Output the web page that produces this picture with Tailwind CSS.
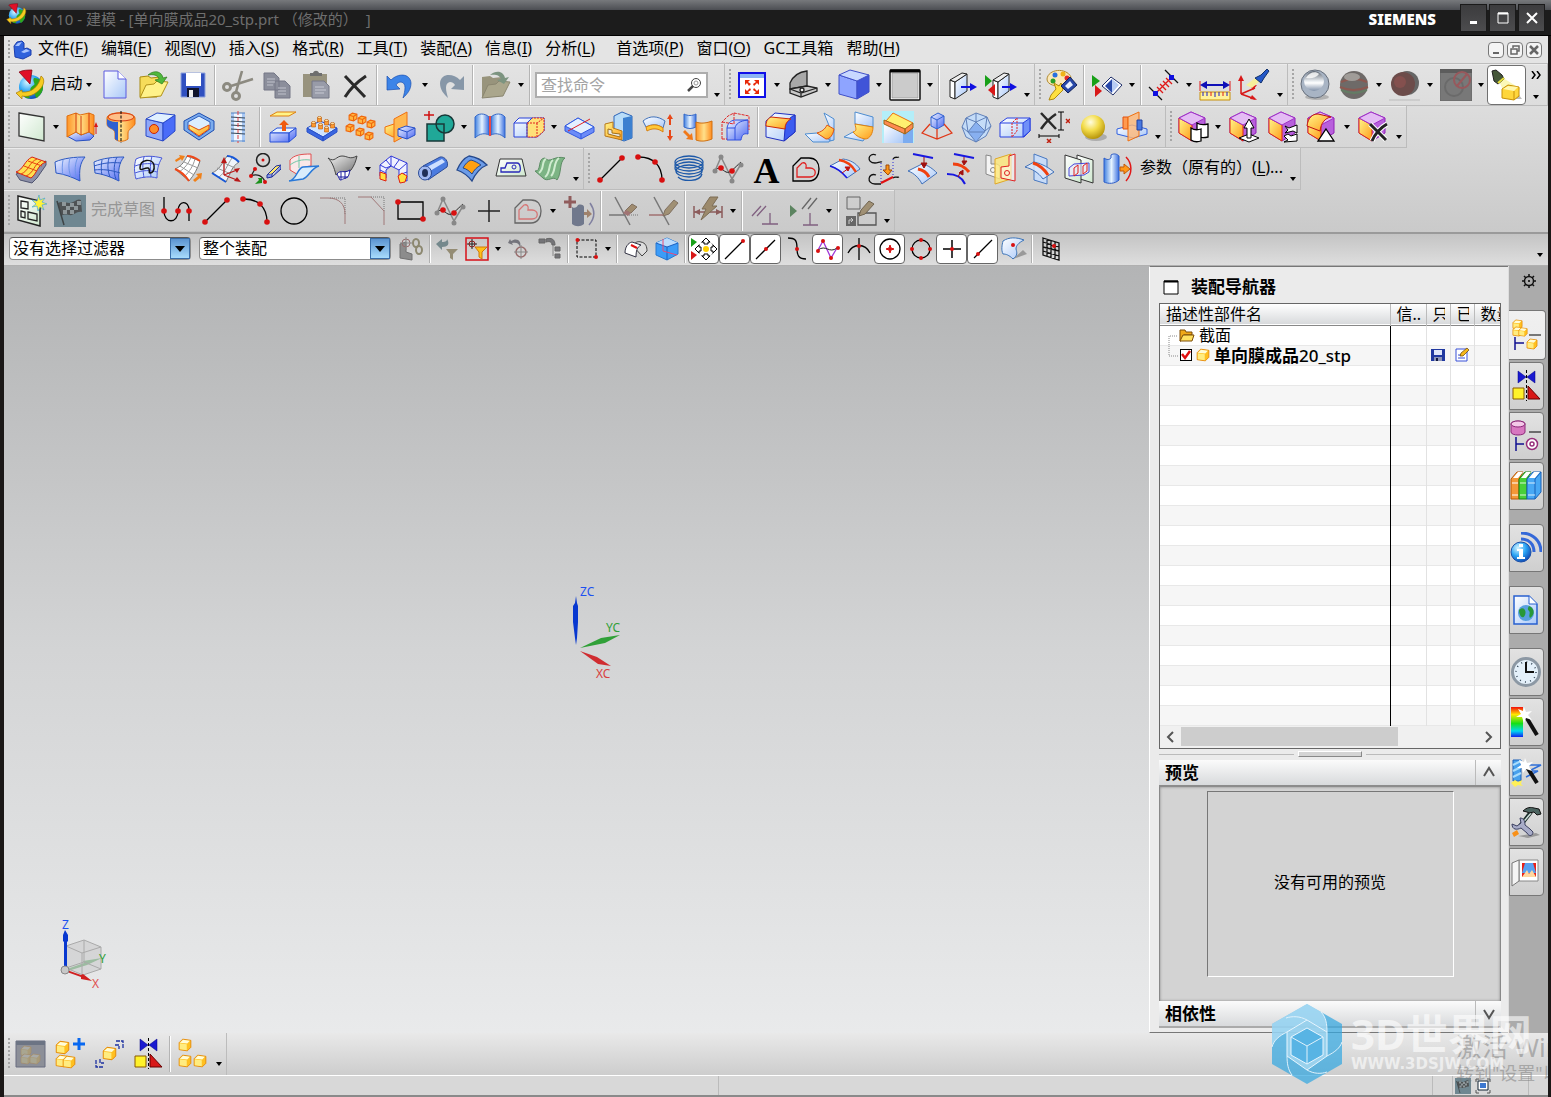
<!DOCTYPE html>
<html lang="zh-CN">
<head>
  <meta charset="UTF-8" />
  <meta name="viewport" content="width=device-width, initial-scale=1.0" />
  <title>NX 10 - 建模</title>
  <script src="https://cdn.jsdelivr.net/npm/@tailwindcss/browser@4"></script>
</head>
<body class="flex h-screen flex-col overflow-hidden bg-[#1b1817] font-['Noto_Sans','Noto_Sans_CJK_SC',sans-serif] text-base leading-5 text-black">

  <!-- shared gradients and symbols -->
  <svg class="absolute size-0" aria-hidden="true">
    <defs>
      <linearGradient id="gB" x1="0" y1="0" x2="1" y2="1"><stop offset="0" stop-color="#f2f8ff"/><stop offset="1" stop-color="#4a66f2"/></linearGradient>
      <linearGradient id="gC" x1="0" y1="0" x2="1" y2="0"><stop offset="0" stop-color="#3f7fe0"/><stop offset=".5" stop-color="#e6f3ff"/><stop offset="1" stop-color="#3a6fe0"/></linearGradient>
      <linearGradient id="gL" x1="0" y1="0" x2="1" y2="1"><stop offset="0" stop-color="#ffffff"/><stop offset="1" stop-color="#a9c8f8"/></linearGradient>
      <linearGradient id="gO" x1="0" y1="0" x2="1" y2="1"><stop offset="0" stop-color="#fff68a"/><stop offset="1" stop-color="#ff9a1a"/></linearGradient>
      <linearGradient id="gD" x1="0" y1="0" x2="1" y2="0"><stop offset="0" stop-color="#ff9326"/><stop offset=".5" stop-color="#ffe08a"/><stop offset="1" stop-color="#ff8a1c"/></linearGradient>
      <linearGradient id="gG" x1="0" y1="0" x2="1" y2="1"><stop offset="0" stop-color="#ffffff"/><stop offset="1" stop-color="#cfe8cf"/></linearGradient>
      <linearGradient id="gS" x1="0" y1="0" x2="1" y2="1"><stop offset="0" stop-color="#f4f4f4"/><stop offset="1" stop-color="#6c6c6c"/></linearGradient>
      <linearGradient id="gRain" x1="0" y1="0" x2="0" y2="1"><stop offset="0" stop-color="#f20c0c"/><stop offset=".25" stop-color="#ffe600"/><stop offset=".55" stop-color="#16e016"/><stop offset=".8" stop-color="#00d8f0"/><stop offset="1" stop-color="#1020f0"/></linearGradient>
      <radialGradient id="gSph" cx=".4" cy=".3" r=".7"><stop offset="0" stop-color="#fffde0"/><stop offset=".5" stop-color="#f3dc4a"/><stop offset="1" stop-color="#b8960c"/></radialGradient>
      <radialGradient id="gEarth" cx=".35" cy=".3" r=".8"><stop offset="0" stop-color="#d8f6ff"/><stop offset=".5" stop-color="#2aa4f4"/><stop offset="1" stop-color="#0a3aa8"/></radialGradient>
      <linearGradient id="gChr" x1="0" y1="0" x2="0" y2="1"><stop offset="0" stop-color="#5c6470"/><stop offset=".5" stop-color="#e8ecf0"/><stop offset=".6" stop-color="#ffffff"/><stop offset="1" stop-color="#8090a8"/></linearGradient>
    </defs>
    <symbol id="caret" viewBox="0 0 8 4"><path d="M1 0h6L4 4z"/></symbol>
    <symbol id="cube" viewBox="0 0 12 12"><path d="M1 4 4 1l7 1v6l-3 3-7-1z" fill="#ffc020" stroke="#e58a08" stroke-width=".8"/><path d="M1.600 4 4.300 1.500l5.900.8-2.300 2.400z" fill="#fffcd8"/><path d="M1.500 4.500l6 .9v5L1.500 9.600z" fill="#ffec80"/></symbol>
    <symbol id="ocube" viewBox="0 0 9 9"><path d="M1 3 4 1l4 1v4L5 8 1 7z" fill="#ffb640" stroke="#f0660c"/><path d="M1 3l4 1 3-2M5 4v4" fill="none" stroke="#f0660c"/></symbol>
    <symbol id="peg" viewBox="0 0 5 7"><path d="M.5 1.500v4.500h4V1.500z" fill="#ff9a30" stroke="#b85808" stroke-width=".6"/><ellipse cx="2.500" cy="1.500" rx="2" ry="1.100" fill="#ffe0a0" stroke="#b85808" stroke-width=".6"/></symbol>
    <symbol id="pcube" viewBox="0 0 32 32"><path d="M2 7 14 1l14 6v15l-13 8-13-8z" fill="#b860dc" stroke="#9020b8"/><path d="M2 7l13 7v16L2 22z" fill="url(#gO)" stroke="#e0280c"/><path d="M2 7 14 1l14 6-13 7z" fill="#e4bcf4" stroke="#a030c8"/></symbol>
    <symbol id="nx" viewBox="0 0 32 32"><circle cx="16" cy="18" r="12" fill="url(#gEarth)"/><path d="M19 9c6 0 9 4 9 9s-3 8-6 11c-3-2-1-6-5-7s0-5 2-6-2-4 0-7zM8 26c3-1 6 0 7 3-3 1-6-1-7-3z" fill="#2ea81c"/><path d="M1 24l6-3v2c10 1 17-6 19-16 5 3 3 11-4 16-5 4-10 5-15 4v3z" fill="#f6cc22" stroke="#a87800" stroke-width=".7"/><path d="M4 3c4-2 9-2 13-2l-2 14z" fill="#e01028" stroke="#7c0010" stroke-width=".7"/></symbol>
    <symbol id="flag" viewBox="0 0 32 32"><path d="M0 0h32v32H0z" fill="#6f8791"/><path d="M4 8c5-3 10 2 15-1s6-3 8-2l1 12c-6-1-8 4-13 3s-6 0-8 1z" fill="#4e5254"/><path d="M8 7h4v4H8zM16 8h4v4h-4zM23 6h4v4h-4zM12 11h4v4h-4zM20 11h4v4h-4zM9 15h4v4H9zM16 15h4v4h-4z" fill="#8e979a"/><path d="M3 6l7 24" stroke="#3e4446" stroke-width="1.500"/></symbol>
    <symbol id="mirror" viewBox="0 0 32 32"><path d="M8 1l8 6-8 6zM25 1l-8 6 8 6z" fill="#1a1ad0" stroke="#000080" stroke-width=".5"/><path d="M16.500 0v31" stroke="#000" stroke-dasharray="3 2"/><path d="M3 18h11v11H3z" fill="#fff22a" stroke="#8a5a00"/><path d="M18 16v13h12z" fill="#d81818" stroke="#600"/></symbol>
    <symbol id="spline" viewBox="0 0 32 32"><path d="M3 18 9 4l11 22 9-15" fill="none" stroke="#888" stroke-width="1.500"/><path d="M3 18c4-6 7-1 11 1s8-4 15-10" fill="none" stroke="#222"/><g fill="#888"><circle cx="3" cy="18" r="2.500"/><circle cx="9" cy="4" r="2.500"/><circle cx="20" cy="28" r="2.500"/><circle cx="29" cy="12" r="2.500"/></g><g fill="#d81010"><circle cx="9" cy="15" r="2.800"/><circle cx="20" cy="18" r="2.800"/></g></symbol>
    <symbol id="line" viewBox="0 0 32 32"><path d="M5 27 27 5" stroke="#000" stroke-width="1.300"/><circle cx="5" cy="27" r="2.800" fill="#d81010"/><circle cx="27" cy="5" r="2.800" fill="#d81010"/></symbol>
    <symbol id="arc" viewBox="0 0 32 32"><path d="M5 4c14 0 23 8 23 23" fill="none" stroke="#000" stroke-width="1.300"/><g fill="#d81010"><circle cx="4" cy="4" r="2.800"/><circle cx="21" cy="9" r="2.800"/><circle cx="28" cy="27" r="2.800"/></g></symbol>
    <symbol id="offset" viewBox="0 0 32 32"><path d="M3 28V13L11 5h8c7 0 10 5 10 11s-3 12-10 12z" fill="none" stroke="#000" stroke-width="1.300"/><path d="M7 24v-9l5-5c3-1 5 1 4 5h4c7 0 7 9 0 9z" fill="none" stroke="#e02020" stroke-width="1.300"/></symbol>
  </svg>

  <!-- title bar -->
  <header class="flex h-9 shrink-0 items-center border-b border-black bg-[linear-gradient(#77797c_0,#4c4e53_10px,#1c1c1c_10px)] pl-1.5 pr-1.5">
    <svg class="mb-2 size-[22px] shrink-0"><use href="#nx"/></svg>
    <h1 class="ml-1 flex-1 pt-0.5 text-[15px] whitespace-pre text-[#6e6e6e]">NX 10 - 建模 - [单向膜成品20_stp.prt （修改的）  ]</h1>
    <span class="mr-6 pt-0.5 text-[15px] font-black text-white">SIEMENS</span>
    <div class="flex gap-0.5 [&>button]:grid [&>button]:h-7 [&>button]:w-[27px] [&>button]:place-items-center [&>button]:border [&>button]:border-[#1a1a1a] [&>button]:bg-linear-to-b [&>button]:from-[#3c3c3e] [&>button]:to-[#4c4c4e]">
      <button aria-label="最小化"><svg class="size-4" viewBox="0 0 16 16"><path d="M4 11h7v3H4z" fill="#fff"/></svg></button>
      <button aria-label="最大化"><svg class="size-4" viewBox="0 0 16 16"><path d="M3 3h10v10H3z" fill="none" stroke="#fff"/><path d="M3 3.500h10" stroke="#fff" stroke-width="2"/></svg></button>
      <button aria-label="关闭"><svg class="size-4" viewBox="0 0 16 16"><path d="M3 3l10 10M13 3 3 13" stroke="#fff" stroke-width="2"/></svg></button>
    </div>
  </header>

  <div class="ml-1 mr-[3px] flex min-h-0 flex-1 flex-col bg-[#d4d4d4]">

    <!-- menu bar -->
    <nav class="flex h-7 shrink-0 items-center border-b border-[#bdbdbd] bg-[#e4e4e4] pl-1 pr-1.5 whitespace-nowrap [&_u]:underline-offset-2">
      <i class="h-5 w-0.5 bg-[repeating-linear-gradient(#a2a2a2_0_2px,transparent_2px_4px)]"></i>
      <svg class="mr-1.5 ml-0.5 size-5 shrink-0" viewBox="0 0 20 20"><path d="M2 6l3-4 5-1 2 2v6l3-1 4 2v5l-8 4-8-2z" fill="#2f62dc" stroke="#1c3fae"/><path d="M3 6l3-3 4-1-3 4zM9 12l5-3 4 2-6 2z" fill="#a8c4ff"/></svg>
      <div class="flex gap-x-[13px] pb-1">
        <a href="#">文件(<u>F</u>)</a>
        <a href="#">编辑(<u>E</u>)</a>
        <a href="#">视图(<u>V</u>)</a>
        <a href="#">插入(<u>S</u>)</a>
        <a href="#">格式(<u>R</u>)</a>
        <a href="#">工具(<u>T</u>)</a>
        <a href="#">装配(<u>A</u>)</a>
        <a href="#">信息(<u>I</u>)</a>
        <a href="#">分析(<u>L</u>)</a>
        <a href="#" class="ml-2">首选项(<u>P</u>)</a>
        <a href="#">窗口(<u>O</u>)</a>
        <a href="#">GC工具箱</a>
        <a href="#">帮助(<u>H</u>)</a>
      </div>
      <div class="ml-auto flex gap-[3px] [&>button]:size-4 [&>button]:rounded-sm [&>button]:border [&>button]:border-[#777] [&>button]:bg-[#f4f4f4]">
        <button aria-label="最小化窗口"><svg viewBox="0 0 14 14"><path d="M4 9h6v2H4z" fill="#666"/></svg></button>
        <button aria-label="还原窗口"><svg viewBox="0 0 14 14"><path d="M5 5V3h6v5H9M3 6h6v5H3z" fill="none" stroke="#666" stroke-width="1.500"/></svg></button>
        <button aria-label="关闭窗口"><svg viewBox="0 0 14 14"><path d="M3 3l8 8M11 3l-8 8" stroke="#666" stroke-width="2.500"/></svg></button>
      </div>
    </nav>

    <!-- tool bars -->
    <div class="shrink-0 overflow-hidden border-b-2 border-[#9a9a9a] bg-linear-to-b from-[#e3e3e3] to-[#cacaca] whitespace-nowrap
                [&_section]:flex [&_section]:h-[42px] [&_section]:items-center [&_section]:border-r [&_section]:border-b [&_section]:border-[#bcbcbc] [&_section]:shadow-[inset_0_1px_#ebebeb]
                [&_button]:flex [&_button]:h-10 [&_button]:shrink-0 [&_button]:items-center [&_button]:justify-center
                [&_i]:mr-px [&_i]:ml-1 [&_i]:h-8 [&_i]:w-0.5 [&_i]:shrink-0 [&_i]:bg-[repeating-linear-gradient(#a6a6a6_0_2px,transparent_2px_4px)]
                [&_hr]:mx-0.5 [&_hr]:h-10 [&_hr]:w-0.5 [&_hr]:shrink-0 [&_hr]:border-0 [&_hr]:border-r [&_hr]:border-l [&_hr]:border-r-white [&_hr]:border-l-[#b4b4b4]">

      <div class="flex">
        <section aria-label="标准">
          <i></i>
          <button class="w-[39px]" aria-label="NX"><svg class="size-8"><use href="#nx"/></svg></button>
          <button class="w-[33px] pb-1">启动</button>
          <button class="w-3" aria-label="展开"><svg class="h-1 w-2"><use href="#caret"/></svg></button>
          <button class="w-[39px]" aria-label="新建"><svg class="size-8" viewBox="0 0 32 32"><path d="M5 2h14l8 8v19H5z" fill="url(#gL)" stroke="#5a5ae0"/><path d="M19 2v8h8" fill="#fff" stroke="#5a5ae0"/></svg></button>
          <button class="w-[39px]" aria-label="打开"><svg class="size-8" viewBox="0 0 32 32"><path d="M2 8l8-1 3 2 9-1 1 6-4 14H2z" fill="#f6dc5a" stroke="#a88a10"/><path d="M2 29 8 16l8-1 3-3 11 1-7 14z" fill="#fff28a" stroke="#b09018"/><path d="M10 6c7-6 14-3 15 3l4-1-5 7-7-4 4-1c-1-4-6-5-11-4z" fill="#4fb83c" stroke="#2c7a1c" stroke-width=".7"/></svg></button>
          <button class="w-[39px]" aria-label="保存"><svg class="size-8" viewBox="0 0 32 32"><path d="M4 4h24v24H4z" fill="#3050c0" stroke="#8ea2dc"/><path d="M9 4h15v13H9z" fill="#fff"/><path d="M10 19h12v9H10z" fill="#10142c"/><path d="M12 21h4v7h-4z" fill="#eee"/></svg></button>
          <hr>
          <button class="w-[39px]" aria-label="剪切"><svg class="size-8" viewBox="0 0 32 32" fill="none" stroke="#8c8a80" stroke-width="3"><circle cx="5" cy="18" r="3.500"/><circle cx="14" cy="27" r="3.500"/><path d="M14 23 20 2M9 17l22-7" stroke-width="2.600"/></svg></button>
          <button class="w-[39px]" aria-label="复制"><svg class="size-8" viewBox="0 0 32 32" fill="#8b8e9b" stroke="#747786"><path d="M3 4h10l5 5v12H3zM14 12h10l5 5v12H14z"/><path d="M6 10h8M6 13h8M6 16h6M17 19h8M17 22h8M17 25h8" stroke="#c0c2cc"/></svg></button>
          <button class="w-[39px]" aria-label="粘贴"><svg class="size-8" viewBox="0 0 32 32"><path d="M3 5h24v23H3z" fill="#98937e"/><path d="M10 7V4h3c1-3 5-3 6 0h3v3z" fill="#6e6e6e"/><path d="M12 12h12l5 5v12H12z" fill="#989ba8" stroke="#747786"/><path d="M15 18h9M15 21h11M15 24h9" stroke="#c8cad4"/></svg></button>
          <button class="w-[39px]" aria-label="删除"><svg class="size-8" viewBox="0 0 32 32"><path d="M6 7l20 21M27 7C18 13 11 20 6 28" fill="none" stroke="#2a2a2a" stroke-width="3"/></svg></button>
          <hr>
          <button class="w-[39px]" aria-label="撤销"><svg class="size-8" viewBox="0 0 32 32"><path d="M3 7l4 4C14 4 26 4 27 14c0 7-4 11-8 15 2-7 4-15-2-16-2 0-4 1-5 3l4 4-13 1z" fill="#3c84e8" stroke="#1c50b0" stroke-width=".7"/></svg></button>
          <button class="w-3" aria-label="展开"><svg class="h-1 w-2"><use href="#caret"/></svg></button>
          <button class="w-[39px]" aria-label="重做"><svg class="size-8" viewBox="0 0 32 32"><path d="M29 7l-4 4C18 4 6 4 5 14c0 7 4 11 8 15-2-7-4-15 2-16 2 0 4 1 5 3l-4 4 13 1z" fill="#8797a8"/></svg></button>
          <hr>
          <button class="w-[39px]" aria-label="打开最近的部件"><svg class="size-8" viewBox="0 0 32 32"><path d="M2 8l8-1 3 2 9-1 1 6-4 14H2z" fill="#98947c"/><path d="M2 29 8 16l8-1 3-3 11 1-7 14z" fill="#aaa68c" stroke="#8a8670"/><path d="M10 6c7-6 14-3 15 3l4-1-5 7-7-4 4-1c-1-4-6-5-11-4z" fill="#7c9480"/></svg></button>
          <button class="w-3" aria-label="展开"><svg class="h-1 w-2"><use href="#caret"/></svg></button>
          <hr>
          <label class="ml-0.5 mr-0.5 flex h-[26px] w-[173px] items-center border-2 border-[#adadad] bg-white pl-1 pr-1">
            <input type="text" aria-label="查找命令" placeholder="查找命令" class="min-w-0 flex-1 outline-none placeholder:text-[#a4a4a4]">
            <svg class="size-4" viewBox="0 0 16 16" fill="none" stroke="#444"><circle cx="10" cy="6" r="4.500"/><circle cx="10" cy="6" r="2" stroke="#999"/><path d="M7 9l-5 5" stroke-width="2.500"/></svg>
          </label>
          <button class="w-3.5 pt-5" aria-label="工具条选项"><svg class="h-1 w-2"><use href="#caret"/></svg></button>
        </section>

        <section aria-label="视图">
          <i></i>
          <button class="w-[39px]" aria-label="适合窗口"><svg class="size-8" viewBox="0 0 32 32"><path d="M3 4h26v24H3z" fill="#fff" stroke="#1010e8" stroke-width="2"/><path d="M4 5h24v4H4z" fill="#8cb4f4"/><path d="M9 11h5l-2 2 3 2-2 2-2-3-2 2zM23 11v5l-2-2-3 3-1-2 3-2-2-2zM9 25v-5l2 2 3-3 1 2-3 2 2 2zM23 25h-5l2-2-3-2 1-2 3 3 2-2z" fill="#e82808"/></svg></button>
          <button class="w-3" aria-label="展开"><svg class="h-1 w-2"><use href="#caret"/></svg></button>
          <button class="w-[39px]" aria-label="带边着色"><svg class="size-8" viewBox="0 0 32 32" stroke="#222" stroke-width="1.300"><path d="M3 20v-6C6 7 11 3 20 2v15z" fill="#a8a8a8"/><path d="M3 20l17-3 10 2v3L14 28 3 24z" fill="#c8c8c8"/><path d="M3 20l11 4 16-5M14 24v4" fill="none"/><circle cx="15" cy="21" r="2" fill="#eee"/></svg></button>
          <button class="w-3" aria-label="展开"><svg class="h-1 w-2"><use href="#caret"/></svg></button>
          <button class="w-[39px]" aria-label="定向视图"><svg class="size-8" viewBox="0 0 32 32" stroke="#4050c8"><path d="M1 6l18 6v18L1 25z" fill="#8ea4ff"/><path d="M19 12l12-6v17l-12 7z" fill="#4054d8"/><path d="M1 6l11-5 19 5-12 6z" fill="#c8d8ff"/></svg></button>
          <button class="w-3" aria-label="展开"><svg class="h-1 w-2"><use href="#caret"/></svg></button>
          <button class="w-[39px]" aria-label="背景"><svg class="size-8" viewBox="0 0 32 32"><rect x="1" y="1" width="30" height="30" rx="1" fill="#fff" stroke="#111" stroke-width="1.500"/><path d="M3 4h26v25H3z" fill="#cbcbcb" stroke="#777" stroke-width=".5"/><path d="M1 2h30" stroke="#000" stroke-width="3"/></svg></button>
          <button class="w-3" aria-label="展开"><svg class="h-1 w-2"><use href="#caret"/></svg></button>
          <hr>
          <button class="w-[39px]" aria-label="剪切截面"><svg class="size-8" viewBox="0 0 32 32" stroke="#222"><path d="M4 11l5 2v17l-5-2z" fill="#fff"/><path d="M9 13l12-8v17L9 30z" fill="url(#gL)"/><path d="M4 11l12-7 5 1-12 8z" fill="#eee"/><path d="M15 17h9v-3l7 4-7 4v-3h-9z" fill="#1010e0" stroke="none"/></svg></button>
          <button class="w-[39px]" aria-label="编辑截面"><svg class="size-8" viewBox="0 0 32 32" stroke="#222"><path d="M8 11l5 2v17l-5-2z" fill="#fff"/><path d="M13 13l11-8v17l-11 8z" fill="url(#gL)"/><path d="M8 11l11-7 5 1-11 8z" fill="#eee"/><path d="M17 17h8v-3l7 4-7 4v-3h-8z" fill="#1010e0" stroke="none"/><path d="M0 6v12l7-6z" fill="#18a018" stroke="none"/><path d="M10 15v12l-7-6z" fill="#d81818" stroke="none"/></svg></button>
          <button class="w-3.5 pt-5" aria-label="工具条选项"><svg class="h-1 w-2"><use href="#caret"/></svg></button>
        </section>

        <section aria-label="实用工具">
          <i></i>
          <button class="w-[39px]" aria-label="编辑对象显示"><svg class="size-8" viewBox="0 0 32 32"><path d="M1 10C2 0 20-2 25 8c0 5-6 4-8 8-7 2-16 0-16-6z" fill="#fbe8b8" stroke="#b08a30"/><circle cx="9" cy="6" r="2.500" fill="#2870e0"/><circle cx="17" cy="5" r="2.500" fill="#f0b418"/><circle cx="7" cy="12" r="2.500" fill="#28a028"/><circle cx="21" cy="9" r="2.500" fill="#e02828"/><path d="M8 14l5 3 2-3 2 7-9 9-5 1 2-5 5-6z" fill="#ffe040" stroke="#b08a10"/><path d="M15 17 24 8l7 8-9 8z" fill="#2848a8" stroke="#10205c"/><path d="M19 17l5-5 3 4-5 4z" fill="#e8f0ff"/></svg></button>
          <hr>
          <button class="w-[39px]" aria-label="显示和隐藏"><svg class="size-8" viewBox="0 0 32 32"><path d="M1 6v12l8-6z" fill="#18a018"/><path d="M4 16v12l7-6z" fill="#d81818"/><path d="M11 17 20 8l11 8-9 10z" fill="#fff" stroke="#1c2c68"/><path d="M14 17l7-7v14z" fill="#2848a8"/><path d="M21 10l7 6-7 8z" fill="#b8ccf4"/></svg></button>
          <button class="w-3" aria-label="展开"><svg class="h-1 w-2"><use href="#caret"/></svg></button>
          <hr>
          <button class="w-[39px]" aria-label="测量距离"><svg class="size-8" viewBox="0 0 32 32"><path d="M1 18l13 13M17 1l13 13" stroke="#111" stroke-width="1.300"/><path d="M7 25 24 8M9 18l6 6M12 15l6 6M15 12l6 6M18 9l6 6" stroke="#e01818" stroke-width="1.300"/><path d="M5 22h5v5H5zM21 6h5v5h-5z" fill="#1010e0"/></svg></button>
          <button class="w-3" aria-label="展开"><svg class="h-1 w-2"><use href="#caret"/></svg></button>
          <button class="w-[39px]" aria-label="测量长度"><svg class="size-8" viewBox="0 0 32 32"><path d="M1 12v10M31 12v10" stroke="#e01818"/><path d="M6 16h20" stroke="#1010b8" stroke-width="2"/><path d="M1 16l7-4v8zM31 16l-7-4v8z" fill="#1010b8"/><path d="M1 23h30v8H1z" fill="#fff29a" stroke="#c89008"/><path d="M4 23v4M8 23v4M16 23v5M20 23v4M28 23v4" stroke="#1c1cc8"/><path d="M12 23v4M24 23v4" stroke="#e01818"/></svg></button>
          <button class="w-[39px]" aria-label="WCS 定向"><svg class="size-8" viewBox="0 0 32 32"><path d="M3 25V8M3 25l14-6M3 25l14 5" stroke="#d81818" stroke-width="1.500"/><path d="M0 12l3-6 3 6zM12 17l7-1-4 5zM12 30l7 1-5-5z" fill="#d81818"/><path d="M8 16 20 7l3 4-9 8z" fill="#f6f09c"/><path d="M17 9l6-3 6-6 2 2-5 7-3 5z" fill="#2458c8" stroke="#10306c"/></svg></button>
          <button class="w-3.5 pt-5" aria-label="工具条选项"><svg class="h-1 w-2"><use href="#caret"/></svg></button>
        </section>

        <section aria-label="真实着色" class="flex-1">
          <i></i>
          <button class="w-[39px]" aria-label="真实着色"><svg class="size-8" viewBox="0 0 32 32"><ellipse cx="18" cy="28" rx="12" ry="3" fill="#0003"/><circle cx="16" cy="15" r="14" fill="#a8b4c4" stroke="#68707c"/><circle cx="15" cy="12" r="10" fill="url(#gChr)"/><path d="M7 9c3-6 10-7 13-4-3 4-8 5-13 4z" fill="#fffc"/></svg></button>
          <button class="w-[39px]" aria-label="对象材料"><svg class="size-8" viewBox="0 0 32 32"><circle cx="16" cy="16" r="14" fill="#6e6a68"/><path d="M3 13c9-4 17-4 26 0M2 18c9 4 18 4 28 0" fill="none" stroke="#8c5850" stroke-width="2"/><path d="M3 21c9 4 17 4 26 0" fill="none" stroke="#647c64" stroke-width="2"/><ellipse cx="14" cy="8" rx="8" ry="4" fill="#a09c98"/></svg></button>
          <button class="w-3" aria-label="展开"><svg class="h-1 w-2"><use href="#caret"/></svg></button>
          <button class="w-[39px]" aria-label="全局反射"><svg class="size-8" viewBox="0 0 32 32"><circle cx="18" cy="14" r="12" fill="#666"/><circle cx="14" cy="15" r="12" fill="#6c4c4a"/><circle cx="11" cy="13" r="6" fill="#84504e"/><path d="M0 31h31" stroke="#bbb"/></svg></button>
          <button class="w-3" aria-label="展开"><svg class="h-1 w-2"><use href="#caret"/></svg></button>
          <button class="w-[39px]" aria-label="背景图像"><svg class="size-8" viewBox="0 0 32 32"><path d="M0 0h32v32H0z" fill="#787878" stroke="#666"/><path d="M0 0h32v4H0z" fill="#5c5c5c"/><circle cx="14" cy="18" r="9" fill="none" stroke="#6a6a6a" stroke-width="2"/><circle cx="22" cy="11" r="8" fill="none" stroke="#98585c" stroke-width="2"/><path d="M17 17 27 5" stroke="#98585c" stroke-width="2"/></svg></button>
          <button class="w-3" aria-label="展开"><svg class="h-1 w-2"><use href="#caret"/></svg></button>
          <button class="w-[39px] rounded border border-[#707070] bg-white" aria-label="光源"><svg class="size-8" viewBox="0 0 32 32"><path d="M8 12l4-3 18 11-16 6z" fill="#fbf8b8"/><path d="M1 2l4-1 6 5 2 4-6 5-4-3z" fill="#46583a" stroke="#222"/><path d="M7 14l6-5" stroke="#e8e03a" stroke-width="2"/><path d="M19 30h12l-3-4z" fill="#bbb"/><path d="M11 20l6-4 11 2v9l-5 4-12-2z" fill="#ffd63c" stroke="#c89008"/><path d="M12 20l5-3 10 1-4 4z" fill="#fff8b0"/><path d="M23 22v9" stroke="#c89008"/></svg></button>
          <button class="w-5 flex-col gap-4" aria-label="更多按钮"><svg class="h-2 w-3" viewBox="0 0 12 8"><path d="M2 0l3 4-3 4M7 0l3 4-3 4" fill="none" stroke="#000" stroke-width="1.500"/></svg><svg class="h-1 w-2"><use href="#caret"/></svg></button>
        </section>
      </div>

      <div class="flex">
        <section aria-label="特征">
          <i></i>
          <button class="w-[39px]" aria-label="基准平面"><svg class="size-8" viewBox="0 0 32 32"><path d="M4 2l25 4v24L4 25z" fill="url(#gG)" stroke="#333" stroke-width="1.300"/></svg></button>
          <button class="w-3" aria-label="展开"><svg class="h-1 w-2"><use href="#caret"/></svg></button>
          <button class="w-[39px]" aria-label="拉伸"><svg class="size-8" viewBox="0 0 32 32"><path d="M1 25l9-4 5 3 8-3 5 4-4 4-14 1z" fill="url(#gB)" stroke="#2850c0"/><path d="M1 5l9-3 4 2 9-2 5 2v20l-5-3-8 3-5-3-9 5z" fill="url(#gD)" stroke="#e07010"/><path d="M10 2v19M15 5v19M23 2v19" stroke="#d0380c" fill="none"/><path d="M30 23V15" stroke="#d81818"/><path d="M28 16l2-5 2 5z" fill="#d81818"/></svg></button>
          <button class="w-[39px]" aria-label="旋转"><svg class="size-8" viewBox="0 0 32 32"><path d="M2 7c0-7 27-7 28 0v6c-2 4-7 5-7 9v6c-4 3-10 3-13 0v-6c0-5-8-4-8-9z" fill="url(#gD)" stroke="#e07010"/><path d="M2 8c4 3 8 3 11 3v19l-3-2v-6c0-5-8-4-8-9z" fill="#3060d0"/><ellipse cx="16" cy="6" rx="13" ry="4" fill="#ffc088" stroke="#d83810"/><path d="M16 0v32" stroke="#000" stroke-dasharray="3 1.500"/></svg></button>
          <button class="w-[39px]" aria-label="孔"><svg class="size-8" viewBox="0 0 32 32" stroke="#2848c8"><path d="M2 8l17 4v18L2 25z" fill="#90a8f8"/><path d="M19 12l12-8v16l-12 10z" fill="#4a6cf8"/><path d="M2 8l11-6 18 2-12 8z" fill="#e0f0ff"/><circle cx="10" cy="18" r="4.500" fill="#ff8c28" stroke="#c82008"/></svg></button>
          <button class="w-[39px]" aria-label="抽壳"><svg class="size-8" viewBox="0 0 32 32"><path d="M1 10 16 2l15 8v9L16 29 1 19z" fill="#7cacec" stroke="#1c4cb0"/><path d="M5 11l11-6 11 6v7l-11 8-11-8z" fill="#dceeff" stroke="#2c5cc0"/><path d="M6 14l10 5 10-5v4l-10 7-10-7z" fill="url(#gO)" stroke="#e04808"/></svg></button>
          <button class="w-[39px]" aria-label="螺纹"><svg class="size-8" viewBox="0 0 32 32"><path d="M9 2h14v29H9z" fill="#a8c8f4"/><path d="M12 2h8v29h-8z" fill="#f0f6ff"/><path d="M9 2h14M9 30h14" stroke="#5080c0"/><path d="M9 6l14 1M9 10l14 1M9 14l14 1M9 18l14 1M9 22l14 1" stroke="#345"/><path d="M16 0v32" stroke="#e04040" stroke-dasharray="4 2"/></svg></button>
          <hr>
          <button class="w-[39px]" aria-label="偏置面"><svg class="size-8" viewBox="0 0 32 32"><path d="M3 22l7-5h19l-7 5z" fill="#eaf4ff" stroke="#2850d8"/><path d="M3 22h19v9H3zM22 22l7-5v8l-7 6z" fill="url(#gB)" stroke="#2850d8"/><path d="M3 5l7-4h19l-7 4z" fill="#fff48a" stroke="#e08010"/><path d="M15 20v-6h-3l5-5 5 5h-3v6z" fill="#f05a10"/></svg></button>
          <button class="w-[39px]" aria-label="阵列特征"><svg class="size-8" viewBox="0 0 32 32"><path d="M1 17l13-7 17 7-14 9z" fill="#cfe4ff" stroke="#2850c8"/><path d="M1 17v4l16 9v-4zM31 17v4l-14 9v-4z" fill="#3a66e0" stroke="#2850c8"/><use href="#peg" x="11" y="5" width="5" height="7"/><use href="#peg" x="18" y="8" width="5" height="7"/><use href="#peg" x="24" y="11" width="5" height="7"/><use href="#peg" x="5" y="10" width="5" height="7"/><use href="#peg" x="12" y="12" width="5" height="7"/><use href="#peg" x="18" y="15" width="5" height="7"/></svg></button>
          <button class="w-[39px]" aria-label="阵列几何特征"><svg class="size-8" viewBox="0 0 32 32"><use href="#ocube" x="3" y="1" width="10" height="10"/><use href="#ocube" x="12" y="4" width="10" height="10"/><use href="#ocube" x="21" y="8" width="10" height="10"/><use href="#ocube" x="0" y="12" width="10" height="10"/><use href="#ocube" x="10" y="16" width="10" height="10"/><use href="#ocube" x="19" y="20" width="10" height="10"/></svg></button>
          <button class="w-[39px]" aria-label="镜像特征"><svg class="size-8" viewBox="0 0 32 32"><path d="M1 16l9-3 8 3v8l-9 2-8-4z" fill="url(#gO)" stroke="#f07010"/><path d="M10 8l13-7v23l-13 7z" fill="#ffb850" stroke="#f07010"/><path d="M14 18l8-3 9 2v7l-8 4-9-3z" fill="url(#gB)" stroke="#2850c8"/><path d="M14 18l9 3 8-4M23 21v7" stroke="#2850c8" fill="none"/></svg></button>
          <button class="w-[39px]" aria-label="合并"><svg class="size-8" viewBox="0 0 32 32" stroke="#183838" stroke-width="1.500"><path d="M4 13h17v17H4z" fill="#20a898"/><circle cx="22" cy="13" r="9" fill="#20a898"/><path d="M13 13h8v9" fill="none"/><path d="M6 0v9M1 4h10" stroke="#d01010"/></svg></button>
          <button class="w-3" aria-label="展开"><svg class="h-1 w-2"><use href="#caret"/></svg></button>
          <button class="w-[39px]" aria-label="缝合"><svg class="size-8" viewBox="0 0 32 32" stroke="#3468c8"><path d="M1 27V6c3-4 10-4 14 0v18c-4-2-9-2-14 3z" fill="url(#gC)"/><path d="M31 27V6c-3-4-10-4-14 0v18c4-2 9-2 14 3z" fill="url(#gC)"/><path d="M16 5v20" stroke="#e84848" stroke-width="2"/></svg></button>
          <button class="w-[39px]" aria-label="修剪体"><svg class="size-8" viewBox="0 0 32 32"><path d="M1 12l5-5h25v13l-7 6H1z" fill="url(#gL)" stroke="#2840d8"/><path d="M14 12l5-5h12v13l-7 6H14z" fill="#ffe078" stroke="#e02020" stroke-dasharray="2 1"/><path d="M1 12h13v14M14 12l5-5" fill="none" stroke="#2840d8"/><path d="M14 12h10l7-5M24 12v14" fill="none" stroke="#e02020" stroke-dasharray="2 1"/></svg></button>
          <button class="w-3" aria-label="展开"><svg class="h-1 w-2"><use href="#caret"/></svg></button>
          <button class="w-[39px]" aria-label="拆分体"><svg class="size-8" viewBox="0 0 32 32" stroke="#3058e0"><path d="M1 15l13-8 16 9v5l-13 7-16-8z" fill="#6c8cf8"/><path d="M1 15l13-8 16 9-13 7z" fill="#e4f0ff"/><path d="M17 23v5" fill="none"/><path d="M4 20 26 8" stroke="#e02020"/></svg></button>
          <button class="w-[39px]" aria-label="分割面"><svg class="size-8" viewBox="0 0 32 32"><path d="M11 5l8-4 10 4v22l-8 3-10-4z" fill="#b8dcf8" stroke="#2c64b8"/><path d="M20 7l9-2v22l-9 3z" fill="#3c80d0"/><path d="M2 13l8-2v6l9 3v9L2 25z" fill="url(#gO)" stroke="#b87818"/><path d="M5 18l4 1v3l8 1v3l-12-3z" fill="#e8e8e8" stroke="#a07018"/></svg></button>
          <button class="w-[39px]" aria-label="加厚"><svg class="size-8" viewBox="0 0 32 32"><path d="M1 10c7-6 15-5 22 0l-2 7c-5-4-11-4-17-1z" fill="url(#gL)" stroke="#4070b8"/><path d="M4 16c6-3 12-3 17 1v4c-5-4-11-4-16-1z" fill="#ffc838" stroke="#d88010"/><path d="M28 3l3 5h-2v6h-2V8h-2zM28 30l3-5h-2v-6h-2v6h-2z" fill="#e84818"/></svg></button>
          <button class="w-[39px]" aria-label="缠绕"><svg class="size-8" viewBox="0 0 32 32"><path d="M3 3c4 2 8 2 12 0v13c-4 2-8 2-12 0z" fill="url(#gC)" stroke="#3468c8"/><path d="M15 11c5 2 11 1 16-1v18c-5 2-11 3-16 1z" fill="url(#gD)" stroke="#d07010"/><path d="M4 19l5 5 2-2 1 7-7-1 2-2-5-5z" fill="#f07818"/></svg></button>
          <button class="w-[39px]" aria-label="放置"><svg class="size-8" viewBox="0 0 32 32"><path d="M7 17c1-6 5-8 9-8h12v14c-5-1-6 1-7 6H7z" fill="url(#gB)" stroke="#3050e0"/><path d="M7 17h8c1-4 4-7 13-8M15 17v12" fill="none" stroke="#3050e0"/><path d="M2 28V11l6-6 6-3 15 3v14M2 28h5M2 11l12 2M14 2v11" fill="none" stroke="#e02828" stroke-dasharray="3 1"/></svg></button>
          <hr>
          <button class="w-[39px]" aria-label="边倒圆"><svg class="size-8" viewBox="0 0 32 32" stroke="#2030c0"><path d="M1 10l9-8 20 2v17L19 30 1 26z" fill="url(#gL)"/><path d="M20 18c0-7 5-12 10-14v17L19 30z" fill="#3c5cf0"/><path d="M1 15c0-4 1-7 5-9l20 2c-4 2-6 5-6 10z" fill="url(#gO)" stroke="#d02808"/></svg></button>
          <button class="w-[39px]" aria-label="面倒圆"><svg class="size-8" viewBox="0 0 32 32" stroke="#4c8cd0"><path d="M20 2l10 6v21l-4 1V17z" fill="url(#gL)"/><path d="M1 23l12-1 13 7-1 2H9z" fill="url(#gL)"/><path d="M13 22c7-2 9-6 10-8l7 4c-1 6-4 10-8 10z" fill="url(#gO)" stroke="#e05010"/></svg></button>
          <button class="w-[39px]" aria-label="软倒圆"><svg class="size-8" viewBox="0 0 32 32" stroke="#4c8cd0"><path d="M12 1l18 5v10l-18-3z" fill="url(#gL)"/><path d="M1 26l9-5 12 6-2 3z" fill="url(#gL)"/><path d="M12 13l18 3c0 6-3 12-8 12-5-1-9-3-12-7 4-1 3-3 2-8z" fill="url(#gO)" stroke="#e08010"/></svg></button>
          <button class="w-[39px]" aria-label="倒斜角"><svg class="size-8" viewBox="0 0 32 32"><path d="M0 0h32v32H0z" fill="#b4eef8"/><path d="M2 13l19 8v11H2z" fill="url(#gL)"/><path d="M21 20l10-7v19H21z" fill="#7cacf0"/><path d="M4 10 11 2l20 10-8 6z" fill="#fff070" stroke="#f07010"/><path d="M2 9l21 9v5L2 13zM23 18l8-6v5l-8 6z" fill="#ff8a50" stroke="#a06818"/></svg></button>
          <button class="w-[39px]" aria-label="拔模"><svg class="size-8" viewBox="0 0 32 32"><path d="M10 6l7-4 6 3v9l-7 4-6-3z" fill="url(#gB)" stroke="#3060d0"/><path d="M10 6l6 3 7-4M16 9v9" fill="none" stroke="#3060d0"/><path d="M9 13 1 22l15 6 15-6-8-9M16 18v10" fill="none" stroke="#e03818" stroke-width="1.300"/></svg></button>
          <button class="w-[39px]" aria-label="变换体"><svg class="size-8" viewBox="0 0 32 32" stroke="#6080b8"><path d="M16 2l11 4 4 9-5 10-10 6-10-5-4-10 4-9z" fill="#c4dcf8"/><path d="M16 11l-8 10 8 10 9-11z" fill="#88b0f0"/><path d="M6 7l10 4 11-5M16 2v9M8 21h17M2 16l6 5M31 15l-6 5M6 7l2 14M27 6l-2 14" fill="none"/></svg></button>
          <button class="w-[39px]" aria-label="分割体"><svg class="size-8" viewBox="0 0 32 32" stroke="#2840e0"><path d="M1 12l7-5h23v13l-6 6H1z" fill="url(#gL)"/><path d="M24 12l7-5v13l-7 6z" fill="#7090f8"/><path d="M1 12h23" fill="none"/><path d="M13 26V12l5-5v13z" fill="none" stroke="#e02020" stroke-dasharray="2 1"/></svg></button>
          <button class="w-[39px]" aria-label="删除尺寸"><svg class="size-8" viewBox="0 0 32 32"><path d="M3 2l15 16M18 3C12 7 7 12 3 18" fill="none" stroke="#2a2a2a" stroke-width="2.500"/><path d="M20 1h6M20 19h6M23 1v18M1 23v4M21 23v4M1 25h20" stroke="#000" fill="none"/><path d="M28 8l4 4M32 8l-4 4M9 28l4 4M13 28l-4 4" stroke="#c02010" stroke-width="1.500"/></svg></button>
          <button class="w-[39px]" aria-label="球"><svg class="size-8" viewBox="0 0 32 32"><ellipse cx="19" cy="26" rx="11" ry="4" fill="#0003"/><circle cx="16" cy="16" r="12" fill="url(#gSph)"/></svg></button>
          <button class="w-[39px]" aria-label="镜像体"><svg class="size-8" viewBox="0 0 32 32"><path d="M1 18l15-4 15 4v5l-14 4-16-4z" fill="url(#gL)" stroke="#3060e0"/><path d="M7 6h5v12H7z" fill="#ff9a50" stroke="#e05010"/><path d="M12 6 23 1v24l-11 5z" fill="#ffb878cc" stroke="#f07010"/><path d="M21 9h5v10h-5z" fill="#4878e0" stroke="#2040a0"/></svg></button>
          <button class="w-3.5 pt-5" aria-label="工具条选项"><svg class="h-1 w-2"><use href="#caret"/></svg></button>
        </section>

        <section aria-label="同步建模">
          <i></i>
          <button class="w-[39px]" aria-label="移动面"><svg class="size-8" viewBox="0 0 32 32"><use href="#pcube"/><path d="M20 12c3 2 7 2 11 1v13c-4 1-8 1-11-1z" fill="#fff" stroke="#000" stroke-width="1.300"/><path d="M14 17c3 2 7 2 10 1v12c-3 1-7 1-10-1z" fill="#fff" stroke="#000" stroke-width="1.300"/></svg></button>
          <button class="w-3" aria-label="展开"><svg class="h-1 w-2"><use href="#caret"/></svg></button>
          <button class="w-[39px]" aria-label="拉出面"><svg class="size-8" viewBox="0 0 32 32"><use href="#pcube"/><path d="M11 27l10-4 10 4-10 4z" fill="#fff" stroke="#000"/><path d="M19 27V17h-3l5-9 5 9h-3v10z" fill="#fff" stroke="#000"/></svg></button>
          <button class="w-[39px]" aria-label="替换面"><svg class="size-8" viewBox="0 0 32 32"><use href="#pcube"/><path d="M18 15l4 2 8-3v8l-4-2-8 2 3-3zM17 25l4-2 3 2 6-2v7l-13 1 4-2z" fill="#fff" stroke="#000"/></svg></button>
          <button class="w-[39px]" aria-label="调整倒圆"><svg class="size-8" viewBox="0 0 32 32"><use href="#pcube"/><path d="M1 15C2 7 6 3 12 3l13 3c-6 1-10 6-11 14z" fill="url(#gO)" stroke="#c01010"/><path d="M20 18l8 12H12z" fill="#fff" stroke="#000" stroke-width="1.300"/></svg></button>
          <button class="w-3" aria-label="展开"><svg class="h-1 w-2"><use href="#caret"/></svg></button>
          <button class="w-[39px]" aria-label="删除面"><svg class="size-8" viewBox="0 0 32 32"><use href="#pcube"/><path d="M13 13l16 16M30 13c-7 4-12 10-15 17" fill="none" stroke="#fff" stroke-width="5"/><path d="M13 13l16 16M30 13c-7 4-12 10-15 17" fill="none" stroke="#222" stroke-width="3"/></svg></button>
          <button class="w-3.5 pt-5" aria-label="工具条选项"><svg class="h-1 w-2"><use href="#caret"/></svg></button>
        </section>
      </div>

      <div class="flex">
        <section aria-label="曲面">
          <i></i>
          <button class="w-[39px]" aria-label="快速造面"><svg class="size-8" viewBox="0 0 32 32"><path d="M1 21l4 6 12 3 5-5 9-13v-4z" fill="#8c90a8" stroke="#505470"/><path d="M1 19c8-3 8-11 16-15l14 5c-9 3-9 12-15 16z" fill="#ffe050" stroke="#d82010"/><path d="M9 13l13 5M13 8l14 5M6 21c8-3 8-12 16-15M11 23c8-3 8-12 15-15" fill="none" stroke="#e84010"/></svg></button>
          <button class="w-[39px]" aria-label="直纹"><svg class="size-8" viewBox="0 0 32 32" stroke="#2c58c0"><path d="M1 9c9-4 20-5 30-5-5 6-6 13-5 24C18 24 10 21 2 20z" fill="url(#gB)"/><path d="M9 7c-1 5-1 11 0 15M16 5c-2 7-1 14 1 19M24 4c-3 6-4 15-1 22" fill="none" stroke="#6c94e8"/></svg></button>
          <button class="w-[39px]" aria-label="通过曲线网格"><svg class="size-8" viewBox="0 0 32 32" stroke="#2c58c0"><path d="M1 9c9-4 20-5 30-5-5 6-6 13-5 24C18 24 10 21 2 20z" fill="url(#gB)"/><path d="M9 7c-1 5-1 11 0 15M16 5c-2 7-1 14 1 19M24 4c-3 6-4 15-1 22M1 13c9-3 18-4 27-3M1 17c9-1 17 0 26 3" fill="none"/></svg></button>
          <button class="w-[39px]" aria-label="N 边曲面"><svg class="size-8" viewBox="0 0 32 32" stroke="#4858d8"><path d="M4 6c8-4 18-3 26-1-4 6-5 13-5 20-7-2-14-1-21 1C2 19 2 12 4 6z" fill="url(#gL)"/><path d="M12 4c-2 7-1 14 0 21M20 3c-2 7-2 14-1 21M3 13c8-3 17-3 24-1M3 20c8-3 15-3 22-1" fill="none"/><path d="M8 15c0-9 12-10 14-3 1 6-2 8-4 8s1-4-2-5-8 4-8 0z" fill="none" stroke="#111" stroke-width="1.500"/></svg></button>
          <button class="w-[39px]" aria-label="扫掠"><svg class="size-8" viewBox="0 0 32 32"><path d="M4 16c5-2 9-6 12-13l13 5c-2 7-6 14-11 20z" fill="#fff" stroke="#777"/><path d="M9 13l14 9M13 9l14 6M8 19c6-4 10-9 12-15M13 24c6-6 9-11 11-18" fill="none" stroke="#999"/><path d="M4 16c5 2 10 6 14 12M16 3c5 0 9 2 13 5" fill="none" stroke="#f04818" stroke-width="2"/><path d="M4 7l5-3-1-2 6 1-3 5-1-2-5 3zM22 27l5-4-2-2 6-1-1 7-1-2-5 4z" fill="#f08018"/></svg></button>
          <button class="w-[39px]" aria-label="变化扫掠"><svg class="size-8" viewBox="0 0 32 32"><path d="M2 20c7-3 10-9 15-17 5 0 9 3 12 6-7 4-9 12-13 20z" fill="#f0f4fa" stroke="#777"/><path d="M7 15l14 6M12 9l13 6M9 24c6-4 8-12 13-19" stroke="#999" fill="none"/><path d="M2 20l14 9M17 3c5 0 9 3 12 6" fill="none" stroke="#1858d8" stroke-width="2"/><path d="M14 22V7M14 22l13-5M14 22l13 5" stroke="#b81818" stroke-width="1.300"/><path d="M11 10l3-6 3 6zM24 16l6-1-3 5zM24 28l7 1-4-5z" fill="#b81818"/></svg></button>
          <button class="w-[39px]" aria-label="剖切曲面"><svg class="size-8" viewBox="0 0 32 32"><circle cx="14" cy="7" r="6.500" fill="none" stroke="#222" stroke-width="1.500"/><circle cx="14" cy="7" r="1.500" fill="#d81010"/><path d="M2 23c6-3 12 0 14 6M6 16l-4 7" fill="none" stroke="#222" stroke-width="1.300"/><circle cx="6" cy="16" r="2" fill="#d81010"/><circle cx="2" cy="23" r="2" fill="#d81010"/><circle cx="16" cy="29" r="2" fill="#d81010"/><path d="M6 31l4-4-1-2h4v5z" fill="#189018"/><path d="M18 22l9-9 5-1-9 9z" fill="#ffe868" stroke="#1c2c98"/><path d="M18 22v3l5-1v-3M23 24l9-8v-4" fill="#8898e8" stroke="#1c2c98"/></svg></button>
          <button class="w-[39px]" aria-label="桥接"><svg class="size-8" viewBox="0 0 32 32"><path d="M2 17V7C6 2 13 1 23 1v12c-9 1-11 3-11 10z" fill="#fae8e8" stroke="#e05050"/><path d="M1 28c8-1 8-13 14-14l16-1c-8 2-10 11-16 13z" fill="#d8ecfc" stroke="#2878d8" stroke-width="1.500"/><path d="M2 12c5-4 12-6 20-5M11 3v12" fill="none" stroke="#70c8a8"/></svg></button>
          <button class="w-[39px]" aria-label="修剪片体"><svg class="size-8" viewBox="0 0 32 32"><path d="M1 5c7 5 8-2 14-2s7 4 15 0c-1 5-3 10-6 14-5 4-8-1-15 5C7 14 5 9 1 5z" fill="url(#gS)" stroke="#444"/><path d="M10 21c4-5 7 0 13-4-1 4-1 7-4 8-4 1-4 2-6 2z" fill="#fff" stroke="#1c1ca0"/><path d="M14 19v8M18 18v8M12 24h9" stroke="#1c1ca0"/></svg></button>
          <button class="w-3" aria-label="展开"><svg class="h-1 w-2"><use href="#caret"/></svg></button>
          <button class="w-[39px]" aria-label="截面"><svg class="size-8" viewBox="0 0 32 32" stroke="#3038d8"><path d="M2 12l11-9 16 7v18l-8-3V17l-8-4-5 4v8l-6-2z" fill="#f0f2ff"/><path d="M2 12l6 3 5-2M13 3v10M29 10l-8 7M8 7l5 6M21 7l-5 7M2 17l6 3M21 22l8-3" fill="none"/><path d="M2 19l6 2v7l-6-2zM20 23l4-3 5 3-2 6-5 1z" fill="#ffe040" stroke="#e02010"/></svg></button>
          <button class="w-[39px]" aria-label="管道"><svg class="size-8" viewBox="0 0 32 32"><path d="M6 13 23 4c5-1 9 5 7 10L11 27z" fill="#4c7ce0" stroke="#2c4c98"/><path d="M10 14 25 6l3 3-15 9z" fill="#cfe0ff"/><ellipse cx="8" cy="20" rx="6.500" ry="7" fill="#a0b8f0" stroke="#2c4c98"/><ellipse cx="8" cy="20" rx="3" ry="4" fill="#203058"/></svg></button>
          <button class="w-[39px]" aria-label="修补"><svg class="size-8" viewBox="0 0 32 32"><path d="M1 17C4 10 8 5 13 3c7 1 13 4 18 9-6 2-12 9-15 16C12 23 7 19 1 17z" fill="#6c9ce8" stroke="#24488c" stroke-width="1.300"/><path d="M7 15c2-4 5-7 8-8 4 1 7 3 10 5-4 2-7 5-9 9-3-3-5-5-9-6z" fill="#ffa010" stroke="#24488c"/></svg></button>
          <button class="w-[39px]" aria-label="剖面"><svg class="size-8" viewBox="0 0 32 32"><path d="M5 6h22l4 17H1z" fill="url(#gG)" stroke="#333"/><path d="M6 19v-4h4l2-5h10c4 0 4 9 2 9z" fill="none" stroke="#2828b8" stroke-width="1.300"/><circle cx="19" cy="14" r="2" fill="none" stroke="#2828b8"/></svg></button>
          <button class="w-[39px]" aria-label="分析曲面"><svg class="size-8" viewBox="0 0 32 32"><path d="M1 18c7 1 2-13 10-13 5 6 9-3 20 0-6 4-3 15-8 22-4-5-9 3-14-2z" fill="#7cb484" stroke="#5c8c64"/><path d="M5 20c6-4 2-12 7-14M11 24c6-4 3-14 8-17M17 23c5-4 2-14 8-18" fill="none" stroke="#d0ecd0" stroke-width="2"/></svg></button>
          <button class="w-3.5 pt-5" aria-label="工具条选项"><svg class="h-1 w-2"><use href="#caret"/></svg></button>
        </section>

        <section aria-label="曲线">
          <i></i>
          <button class="w-[39px]" aria-label="直线"><svg class="size-8"><use href="#line"/></svg></button>
          <button class="w-[39px]" aria-label="圆弧"><svg class="size-8"><use href="#arc"/></svg></button>
          <button class="w-[39px]" aria-label="螺旋线"><svg class="size-8" viewBox="0 0 32 32" fill="none" stroke="#1c58a8" stroke-width="1.300"><ellipse cx="16" cy="9" rx="14" ry="6"/><ellipse cx="16" cy="12" rx="14" ry="6"/><ellipse cx="16" cy="15" rx="14" ry="6"/><ellipse cx="16" cy="18" rx="13" ry="6"/><path d="M5 24c5 5 22 5 24-3"/></svg></button>
          <button class="w-[39px]" aria-label="艺术样条"><svg class="size-8"><use href="#spline"/></svg></button>
          <button class="w-[39px] pt-1 font-['Liberation_Serif',serif] text-4xl font-bold" aria-label="文本">A</button>
          <button class="w-[39px]" aria-label="偏置曲线"><svg class="size-8"><use href="#offset"/></svg></button>
          <button class="w-[39px]" aria-label="在面上偏置"><svg class="size-8" viewBox="0 0 32 32"><path d="M1 13 14 6c7 1 13 4 17 10l-13 9C13 19 8 15 1 13z" fill="url(#gL)" stroke="#4070b8"/><path d="M1 13c7 2 12 6 17 12" fill="none" stroke="#1818e0" stroke-width="1.500"/><path d="M10 7c7 1 13 5 17 12" fill="none" stroke="#f04010" stroke-width="2.500"/><path d="M13 20l7-5M16 14l5 0-2 4z" stroke="#c01010" fill="#c01010"/></svg></button>
          <button class="w-[39px]" aria-label="投影曲线"><svg class="size-8" viewBox="0 0 32 32" fill="none"><path d="M8 2c-8-3-10 8-1 8 3 0 5-2 7-1M8 22c-8-3-10 9-1 9h6M25 6c2-3 4-1 6-2M25 25c2-2 4 0 6-1" stroke="#111" stroke-width="1.300"/><path d="M13 10v19M25 6v18" stroke="#2828d8" stroke-dasharray="1 2"/><path d="M13 30l12-6" stroke="#e01010" stroke-width="2"/><path d="M18 12h3v5h3l-4 5-5-5h3z" fill="#ff9818" stroke="#a04808"/></svg></button>
          <button class="w-[39px]" aria-label="投影到面"><svg class="size-8" viewBox="0 0 32 32"><path d="M1 18l14-7c6 1 11 5 15 9L15 31C12 25 7 20 1 18z" fill="url(#gL)" stroke="#4070b8"/><path d="M6 1l20 4" stroke="#1818e0" stroke-width="2"/><path d="M11 16c5 1 9 4 11 8" stroke="#f04010" stroke-width="3" fill="none"/><path d="M17 4v7M14 10l3 5 3-5z" stroke="#a01010" fill="#a01010"/></svg></button>
          <button class="w-[39px]" aria-label="组合投影"><svg class="size-8" viewBox="0 0 32 32" fill="none"><path d="M8 1l20 4M1 21c8 0 15 3 18 10" stroke="#1818e0" stroke-width="2"/><path d="M7 11c7 0 12 3 16 8" stroke="#f04010" stroke-width="3"/><path d="M18 4v5M16 8l2 4 3-4zM12 24l3-6M13 20l4-3v5z" stroke="#a01010" fill="#a01010"/></svg></button>
          <button class="w-[39px]" aria-label="镜像曲线"><svg class="size-8" viewBox="0 0 32 32"><path d="M1 2l5 1v8h6l3 2v13L1 21z" fill="#f4f4f4" stroke="#888"/><circle cx="8" cy="17" r="2.500" fill="none" stroke="#888"/><path d="M10 6 26 1v25l-16 5z" fill="#ffe878cc" stroke="#e0a828"/><path d="M16 14l8-1V3l6-2v27l-14-3z" fill="#fff8" stroke="#e02020"/><circle cx="22" cy="20" r="2.500" fill="none" stroke="#e02020"/></svg></button>
          <button class="w-[39px]" aria-label="相交曲线"><svg class="size-8" viewBox="0 0 32 32"><path d="M10 1l13 5v25l-13-4z" fill="#c8dcf8" stroke="#4878c0"/><path d="M1 14l9-5c9 2 15 6 20 10l-11 7C14 19 8 16 1 14z" fill="#dce8fccc" stroke="#4070b8"/><path d="M9 10c7 2 11 6 15 12" fill="none" stroke="#f04010" stroke-width="3"/></svg></button>
          <button class="w-[39px]" aria-label="截面曲线"><svg class="size-8" viewBox="0 0 32 32"><path d="M14 2l16 5v23l-16-5z" fill="url(#gG)" stroke="#333"/><path d="M2 2l16 5v23L2 25z" fill="url(#gG)" stroke="#333"/><path d="M6 15l5-4 15-1v9l-5 3-15 1z" fill="#e8e8fc99" stroke="#4848d8"/><path d="M11 15v8l4-3v-8zM20 13v8l4-3v-8z" fill="none" stroke="#e02020"/></svg></button>
          <button class="w-[39px]" aria-label="抽取曲线"><svg class="size-8" viewBox="0 0 32 32"><path d="M2 5c3 2 5 2 7 0V2c3-2 6-1 8 1v24c-4 4-11 4-15 2z" fill="url(#gC)" stroke="#2c5cc8"/><path d="M18 14h4v-3l6 5-6 5v-3h-4z" fill="#ff9818" stroke="#c05808"/><path d="M24 4c6 6 7 16 0 24" fill="none" stroke="#e01818" stroke-width="1.500"/></svg></button>
          <button class="w-[149px] pb-1">参数（原有的）(<u class="underline-offset-2">L</u>)...</button>
          <button class="w-3.5 pt-5" aria-label="工具条选项"><svg class="h-1 w-2"><use href="#caret"/></svg></button>
        </section>
      </div>

      <div class="flex">
        <section aria-label="直接草图">
          <i></i>
          <button class="w-[39px]" aria-label="草图"><svg class="size-8" viewBox="0 0 32 32"><path d="M3 1l22 5v25L3 25z" fill="url(#gG)" stroke="#222" stroke-width="1.500"/><path d="M6 6l7 1v7l-7-1zM6 16l4 1v6l-4-1zM13 17l9 2v7l-9-2z" fill="none" stroke="#222" stroke-width="1.300"/><path d="M24 0l1 5 5-2-3 4 5 2-5 1 2 5-4-3-2 4-1-5-5 1 4-3-4-4 5 1z" fill="#fff23a" stroke="#48a8d8" stroke-width=".7"/></svg></button>
          <button class="w-[39px]" disabled aria-label="完成草图标记"><svg class="size-8"><use href="#flag"/></svg></button>
          <button class="w-[68px] pb-1 text-[#969696]" disabled>完成草图</button>
          <button class="w-[39px]" aria-label="轮廓"><svg class="size-8" viewBox="0 0 32 32"><path d="M3 2v14c0 13 14 13 14 0 0-11 11-11 11-1v11" fill="none" stroke="#000" stroke-width="1.300"/><g fill="#d81010"><circle cx="3" cy="16" r="2.800"/><circle cx="17" cy="16" r="2.800"/><circle cx="28" cy="16" r="2.800"/></g></svg></button>
          <button class="w-[39px]" aria-label="直线"><svg class="size-8"><use href="#line"/></svg></button>
          <button class="w-[39px]" aria-label="圆弧"><svg class="size-8"><use href="#arc"/></svg></button>
          <button class="w-[39px]" aria-label="圆"><svg class="size-8" viewBox="0 0 32 32"><circle cx="16" cy="16" r="13" fill="none" stroke="#000" stroke-width="1.300"/></svg></button>
          <button class="w-[39px]" aria-label="圆角"><svg class="size-8" viewBox="0 0 32 32" fill="none"><path d="M13 3h15v16" stroke="#777" stroke-dasharray="1 1"/><path d="M3 3h8c11 0 17 6 17 16v10" stroke="#a07878"/></svg></button>
          <button class="w-[39px]" aria-label="倒斜角"><svg class="size-8" viewBox="0 0 32 32" fill="none"><path d="M15 2h13v14" stroke="#777" stroke-dasharray="1 1"/><path d="M2 2h13l13 14v14" stroke="#a07878"/></svg></button>
          <button class="w-[39px]" aria-label="矩形"><svg class="size-8" viewBox="0 0 32 32"><path d="M3 7h25v17H3z" fill="none" stroke="#000" stroke-width="1.300"/><circle cx="3" cy="7" r="2.800" fill="#d81010"/><circle cx="28" cy="24" r="2.800" fill="#d81010"/></svg></button>
          <button class="w-[39px]" aria-label="艺术样条"><svg class="size-8"><use href="#spline"/></svg></button>
          <button class="w-[39px]" aria-label="点"><svg class="size-8" viewBox="0 0 32 32"><path d="M16 5v22M5 16h22" stroke="#222" stroke-width="1.500"/></svg></button>
          <button class="w-[39px]" aria-label="偏置曲线"><svg class="size-8 opacity-50"><use href="#offset"/></svg></button>
          <button class="w-3" aria-label="展开"><svg class="h-1 w-2"><use href="#caret"/></svg></button>
          <button class="w-[39px]" aria-label="投影曲线"><svg class="size-8" viewBox="0 0 32 32"><path d="M7 1v12M1 7h12" stroke="#905c5c" stroke-width="3"/><path d="M9 12c3 2 5 0 6-2 3-1 6 0 6 2v17c-4 3-8 3-12 0z" fill="#70788c"/><path d="M21 17h3v-3l5 5-5 4v-3h-3z" fill="#a0826c"/><path d="M27 8c5 7 5 15-1 22" fill="none" stroke="#8080a0" stroke-width="1.500"/></svg></button>
          <hr>
          <button class="w-[39px]" aria-label="快速修剪"><svg class="size-8" viewBox="0 0 32 32"><path d="M7 2l15 28M1 20h16" stroke="#777" stroke-width="1.500"/><path d="M17 20h13" stroke="#777" stroke-dasharray="1 1"/><path d="M17 16l7-7 5 3-6 6z" fill="#a08c70" stroke="#807060"/><path d="M15 18l3-3 5 3-3 3z" fill="#a07474"/></svg></button>
          <button class="w-[39px]" aria-label="快速延伸"><svg class="size-8" viewBox="0 0 32 32"><path d="M7 2l15 28" stroke="#777" stroke-width="1.500"/><path d="M2 20h14" stroke="#a07070" stroke-width="1.500"/><path d="M16 21l2-6 9-10 4 3-9 11z" fill="#a09074" stroke="#807060"/></svg></button>
          <hr>
          <button class="w-[39px]" aria-label="快速尺寸"><svg class="size-8" viewBox="0 0 32 32"><path d="M2 11v12M30 11v12M2 17h28" stroke="#8c5c5c" stroke-width="1.500"/><path d="M2 17l6-3v6zM30 17l-6-3v6z" fill="#8c5c5c"/><path d="M18 2h8l-6 9h5L9 25l5-11h-4z" fill="#9c8a6c" stroke="#7c6c54"/></svg></button>
          <button class="w-3" aria-label="展开"><svg class="h-1 w-2"><use href="#caret"/></svg></button>
          <hr>
          <button class="w-[39px]" aria-label="几何约束"><svg class="size-8" viewBox="0 0 32 32"><path d="M3 21l9-10M8 21l9-10M13 29h16M21 18v11" stroke="#806080" stroke-width="1.300"/></svg></button>
          <button class="w-[39px]" aria-label="设为对称"><svg class="size-8" viewBox="0 0 32 32"><path d="M2 10v12l7-6z" fill="#5c8460"/><path d="M14 14l9-11M20 14l9-11" stroke="#666" stroke-width="1.300"/><path d="M15 30h15M22 18v12" stroke="#806080" stroke-width="1.300"/></svg></button>
          <button class="w-3" aria-label="展开"><svg class="h-1 w-2"><use href="#caret"/></svg></button>
          <hr>
          <button class="w-[39px]" aria-label="草图附着"><svg class="size-8" viewBox="0 0 32 32"><path d="M2 2h13v12H2z" fill="none" stroke="#666"/><path d="M13 18h18v12H13z" fill="none" stroke="#555" stroke-width="1.300"/><path d="M1 21h10v10H1z" fill="#666"/><path d="M4 29v-4h4M6 23l2 2-2 2" fill="none" stroke="#ccc"/><path d="M14 21l2-6 8-9 5 3-9 10z" fill="#a09074" stroke="#706450"/></svg></button>
          <button class="w-3.5 pt-5" aria-label="工具条选项"><svg class="h-1 w-2"><use href="#caret"/></svg></button>
        </section>
      </div>
    </div>

    <!-- selection bar -->
    <div class="flex h-8 shrink-0 items-center overflow-hidden border-b border-[#b0b0b0] bg-linear-to-b from-[#c4c4c4] to-[#dedede] pb-0.5 pl-[5px]
                [&>button]:flex [&>button]:h-[30px] [&>button]:shrink-0 [&>button]:items-center [&>button]:justify-center
                [&>hr]:mx-0.5 [&>hr]:h-7 [&>hr]:w-0.5 [&>hr]:shrink-0 [&>hr]:border-0 [&>hr]:border-r [&>hr]:border-l [&>hr]:border-r-white [&>hr]:border-l-[#b0b0b0]">
      <div class="relative h-[23px] w-[182px] shrink-0 rounded-sm border border-[#8c8c8c] border-t-[#555] bg-white">
        <select aria-label="类型过滤器" class="block w-full appearance-none pl-[3px] outline-none"><option>没有选择过滤器</option></select>
        <span class="pointer-events-none absolute top-0 right-0 grid h-[21px] w-5 place-items-center border border-[#3a6ea8] bg-linear-to-b from-[#5c94d0] to-[#a8dcfc]"><svg class="h-2 w-3" viewBox="0 0 12 8"><path d="M1 1h10L6 7z"/></svg></span>
      </div>
      <div class="relative ml-2 h-[23px] w-48 shrink-0 rounded-sm border border-[#8c8c8c] border-t-[#555] bg-white">
        <select aria-label="选择范围" class="block w-full appearance-none pl-[3px] outline-none"><option>整个装配</option></select>
        <span class="pointer-events-none absolute top-0 right-0 grid h-[21px] w-5 place-items-center border border-[#3a6ea8] bg-linear-to-b from-[#5c94d0] to-[#a8dcfc]"><svg class="h-2 w-3" viewBox="0 0 12 8"><path d="M1 1h10L6 7z"/></svg></span>
      </div>
      <button class="w-9 pl-1" aria-label="部件间链接"><svg class="size-6" viewBox="0 0 24 24"><path d="M1 7l6-2v10l6 2v6l-12-2z" fill="#8c8c8c" stroke="#707070"/><circle cx="7" cy="6" r="4" fill="none" stroke="#986c6c"/><path d="M7 0v13M1 6h12" stroke="#888"/><g fill="none" stroke="#8c8870" stroke-width="2"><ellipse cx="17" cy="6" rx="3" ry="4"/><ellipse cx="20" cy="13" rx="3" ry="4"/></g></svg></button>
      <hr>
      <button class="w-7" aria-label="重置过滤器"><svg class="size-6" viewBox="0 0 24 24"><path d="M1 7l6-5v3c4 0 5-1 5-3 3 5 1 8-5 8v3z" fill="#74888c"/><path d="M11 12h12l-5 5v6l-3-2v-4z" fill="#948c74"/></svg></button>
      <button class="w-8" aria-label="选择过滤器"><svg class="size-6" viewBox="0 0 24 24"><path d="M1 1h22v22H1z" fill="none" stroke="#d81018" stroke-width="1.500"/><circle cx="7" cy="7" r="3" fill="none" stroke="#a02020"/><path d="M7 2v10M2 7h10" stroke="#222"/><path d="M10 10h12l-5 5v7l-3-2v-5z" fill="#ffc018" stroke="#d07808"/></svg></button>
      <button class="w-2.5" aria-label="展开"><svg class="h-1 w-2"><use href="#caret"/></svg></button>
      <button class="w-8" aria-label="恢复选择"><svg class="size-6" viewBox="0 0 24 24"><path d="M1 6l2-4 1 2c6-4 11 0 9 6-1-4-4-5-8-4l1 2z" fill="#74747c"/><circle cx="14" cy="15" r="5" fill="none" stroke="#986c6c" stroke-width="1.500"/><path d="M14 8v14M7 15h14" stroke="#888"/></svg></button>
      <button class="w-[30px]" aria-label="向上一级"><svg class="size-6" viewBox="0 0 24 24"><path d="M1 2h6v4H1zM8 2c6-2 9 1 9 6h-3c0-3-2-4-6-3zM17 10h5v4h-5zM17 17h5v4h-5z" fill="#747478" stroke="#666"/><path d="M15 8v11" stroke="#888"/></svg></button>
      <hr>
      <button class="w-[31px]" aria-label="矩形选择"><svg class="size-6" viewBox="0 0 24 24"><path d="M2 3h19v17H2z" fill="none" stroke="#000" stroke-dasharray="3 1.500"/><circle cx="2.500" cy="3" r="2" fill="#d81010"/><circle cx="21" cy="20" r="2" fill="#d81010"/></svg></button>
      <button class="w-3" aria-label="展开"><svg class="h-1 w-2"><use href="#caret"/></svg></button>
      <hr>
      <button class="w-[31px]" aria-label="面规则"><svg class="size-6" viewBox="0 0 24 24"><path d="M9 9c2-4 5-5 8-4 5 1 6 5 6 9l-5 5z" fill="#ddd" stroke="#444"/><path d="M1 16c0-6 3-10 7-11l9 3c-4 2-5 6-5 12z" fill="#fff" stroke="#334"/><path d="M7 8l6 3" stroke="#e01010" stroke-width="2"/></svg></button>
      <button class="w-[31px]" aria-label="实体"><svg class="size-6" viewBox="0 0 24 24"><path d="M1 6l11-5 11 5v11l-11 6-11-5z" fill="#3c9cf8" stroke="#2878d0"/><path d="M1 6l11 4 11-4-11-5z" fill="#bcdcfc"/><path d="M12 10v13M1 6l11 4 11-4" stroke="#1c60c0" fill="none"/><path d="M8 2v12l14 4" fill="none" stroke="#e84878"/></svg></button>
      <hr>
      <button class="w-[31px] rounded border border-[#666] bg-white" aria-label="启用捕捉点"><svg class="size-7" viewBox="0 0 28 28"><path d="M1 3v9l6-5z" fill="#18a018"/><path d="M1 16v9l6-5z" fill="#d81818"/><circle cx="16" cy="14" r="8" fill="none" stroke="#555" stroke-dasharray="2 2"/><path d="M14 9V7h-2l4-4 4 4h-2v2zM14 19v2h-2l4 4 4-4h-2v-2zM11 12H9v-2l-4 4 4 4v-2h2zM21 12h2v-2l4 4-4 4v-2h-2z" fill="#fff" stroke="#000"/><circle cx="16" cy="14" r="3" fill="#ffd000"/></svg></button>
      <button class="w-[31px] rounded border border-[#666] bg-white" aria-label="端点"><svg class="size-7" viewBox="0 0 28 28"><path d="M4 24 22 6" stroke="#000" stroke-width="1.300"/><circle cx="22" cy="6" r="2" fill="#d81010"/></svg></button>
      <button class="w-[31px] rounded border border-[#666] bg-white" aria-label="中点"><svg class="size-7" viewBox="0 0 28 28"><path d="M4 24 23 5" stroke="#000" stroke-width="1.300"/><circle cx="14" cy="14" r="2" fill="#d81010"/></svg></button>
      <button class="w-[31px]" aria-label="控制点"><svg class="size-7" viewBox="0 0 28 28"><path d="M5 3c7 0 9 2 9 10s2 11 9 11" fill="none" stroke="#000" stroke-width="1.300"/><circle cx="14" cy="14" r="2" fill="#d81010"/></svg></button>
      <button class="w-[31px] rounded border border-[#666] bg-white" aria-label="极点"><svg class="size-7" viewBox="0 0 28 28"><path d="M4 15 9 6l8 17 6-10" fill="none" stroke="#a038d8" stroke-width="1.300"/><path d="M4 15c8-6 11 4 19-2" fill="none" stroke="#222"/><g fill="#d81010"><circle cx="4" cy="16" r="2"/><circle cx="9" cy="6" r="2"/><circle cx="17" cy="23" r="2"/><circle cx="24" cy="13" r="2"/></g></svg></button>
      <button class="w-[31px]" aria-label="交点"><svg class="size-7" viewBox="0 0 28 28"><path d="M14 3v22M3 18c5-10 17-10 22 0" fill="none" stroke="#000" stroke-width="1.300"/><circle cx="14" cy="11" r="2" fill="#d81010"/></svg></button>
      <button class="w-[31px] rounded border border-[#666] bg-white" aria-label="圆弧中心"><svg class="size-7" viewBox="0 0 28 28"><circle cx="14" cy="14" r="10" fill="none" stroke="#000" stroke-width="1.300"/><path d="M14 10l1 3 3 1-3 1-1 3-1-3-3-1 3-1z" fill="#d81010" stroke="#d81010"/></svg></button>
      <button class="w-[31px]" aria-label="象限点"><svg class="size-7" viewBox="0 0 28 28"><circle cx="14" cy="14" r="9" fill="none" stroke="#000" stroke-width="1.300"/><g fill="#d81010"><circle cx="14" cy="5" r="2"/><circle cx="14" cy="23" r="2"/><circle cx="5" cy="14" r="2"/><circle cx="23" cy="14" r="2"/></g></svg></button>
      <button class="w-[31px] rounded border border-[#666] bg-white" aria-label="现有点"><svg class="size-7" viewBox="0 0 28 28"><path d="M14 5v18M5 14h18" stroke="#000" stroke-width="1.500"/><circle cx="14" cy="14" r="2" fill="#d81010"/></svg></button>
      <button class="w-[31px] rounded border border-[#666] bg-white" aria-label="点在曲线上"><svg class="size-7" viewBox="0 0 28 28"><path d="M5 23 23 5" stroke="#000" stroke-width="1.300"/><circle cx="9" cy="19" r="2" fill="#d81010"/></svg></button>
      <button class="w-[31px]" aria-label="点在面上"><svg class="size-7" viewBox="0 0 28 28"><path d="M13 24l14-5-4-4z" fill="#999"/><path d="M3 6c6-4 13-4 21-1-6 3-8 6-8 9 1 4 2 6-3 10-4-4-7-5-10-5-2-4-1-9 0-13z" fill="url(#gL)" stroke="#3c74b8"/><circle cx="13" cy="10" r="2" fill="#d81010"/></svg></button>
      <hr>
      <button class="w-[31px]" aria-label="有界栅格上的点"><svg class="size-6" viewBox="0 0 24 24"><path d="M4 1l16 5v17L4 18zM8 2v17M12 4v17M16 5v17M4 5l16 5M4 10l16 4M4 14l16 5" fill="none" stroke="#111" stroke-width="1.300"/><circle cx="15" cy="9" r="2" fill="#d81010"/></svg></button>
      <button class="ml-auto w-4 pt-3" aria-label="工具条选项"><svg class="h-1 w-2"><use href="#caret"/></svg></button>
    </div>

    <div class="flex min-h-0 flex-1">
      <!-- graphics window -->
      <main class="relative min-w-0 flex-1 bg-linear-to-b from-[#b3b4b5] via-[#d3d4d5] to-[#e9eaeb]">
        <svg class="absolute top-[318px] left-[558px] h-[100px] w-[80px]" viewBox="0 0 80 100">
          <path d="M14 12l1 7 1 3v16l-1 16-1 7-1-7-2-16V22l2-3z" fill="#0838d0"/>
          <path d="M18 64l21-10 19-3-15 8z" fill="#30a038"/>
          <path d="M18 67l17 6 14 9-13-2z" fill="#d02c30"/>
          <g class="text-xs"><text x="18" y="12" fill="#1c50f0">ZC</text><text x="44" y="48" fill="#30a038">YC</text><text x="34" y="94" fill="#d84040">XC</text></g>
        </svg>
        <svg class="absolute bottom-9 left-[50px] h-[80px] w-[60px]" viewBox="0 0 60 80">
          <path d="M13 52l17-6-1-2 19-3-15 7-19 6z" fill="#8fbf96"/>
          <g fill="#b8b8b855" stroke="#aaa"><path d="M12 29l18-6 17 7v22l-18 6-17-7z"/><path d="M12 29l16 7 19-6M28 36v21M30 23v22l17 7M30 45l-18 6" fill="none"/></g>
          <path d="M10 52V25l-1-1v-6l2-5 3 5v6l-1 1v27z" fill="#0838d0"/>
          <path d="M13 53l14 5 2-1 9 7-11-2v-2l-14-5z" fill="#d02020"/>
          <circle cx="11" cy="53" r="4" fill="#c8c8c8" stroke="#888"/>
          <g class="text-xs"><text x="8" y="12" fill="#1c50f0">Z</text><text x="45" y="46" fill="#30a038">Y</text><text x="38" y="71" fill="#e05050">X</text></g>
        </svg>
      </main>

      <!-- assembly navigator -->
      <aside class="flex w-[359px] shrink-0 flex-col border-t border-b border-l border-t-[#777] border-b-[#777] border-l-white bg-[#ebebeb] pr-[7px] pb-1 pl-[9px]">
        <h2 class="flex h-9 shrink-0 items-center gap-3 pl-1 pt-1 text-[17px] font-bold">
          <svg class="size-4" viewBox="0 0 16 16"><path d="M1 2h14v13H1z" fill="#fff" stroke="#000"/><path d="M1 2.500h14" stroke="#000" stroke-width="2"/></svg>
          装配导航器
        </h2>
        <div class="shrink-0 border border-[#666]">
          <table class="w-full table-fixed border-collapse bg-white leading-[19px] [&_td]:border-r [&_td]:border-[#e2e2e2] [&_td]:p-0 [&_td:first-child]:border-r-black [&_td:last-child]:border-r-0 [&_tbody_tr]:h-5 [&_tbody_tr]:border-b [&_tbody_tr]:border-[#e8e8e8] [&_tbody_tr:nth-child(even)]:bg-[#f6f6f6] [&_th]:overflow-hidden [&_th]:border-r [&_th]:border-[#bbb] [&_th]:p-0 [&_th]:pl-1.5 [&_th]:text-left [&_th]:font-normal [&_th]:whitespace-nowrap [&_th:last-child]:border-r-0">
            <colgroup><col class="w-[230px]"><col class="w-9"><col class="w-6"><col class="w-6"><col></colgroup>
            <thead>
              <tr class="h-[21px] border-b border-[#888] bg-linear-to-b from-white to-[#d8dadc]"><th>描述性部件名</th><th>信..</th><th><span class="block w-3 overflow-hidden">只</span></th><th><span class="block w-3 overflow-hidden">已</span></th><th>数量</th></tr>
            </thead>
            <tbody>
              <tr><td><div class="flex h-[19px] items-center pl-2"><svg class="mr-px h-[19px] w-2.5 self-end" viewBox="0 0 10 19"><path d="M1 19V10h9" fill="none" stroke="#888" stroke-dasharray="1 1"/></svg><svg class="mr-1 size-4" viewBox="0 0 16 16"><path d="M1 3h5l1 2h6v3H5l-3 6H1z" fill="#f0a818" stroke="#7c4c08"/><path d="M4 8h11l-2 6H1z" fill="#ffe060" stroke="#7c4c08"/></svg>截面</div></td><td><td><td><td></tr>
              <tr><td><div class="flex h-[19px] items-center pl-2"><svg class="mr-0.5 h-[19px] w-2.5" viewBox="0 0 10 19"><path d="M1 0v10h9" fill="none" stroke="#888" stroke-dasharray="1 1"/></svg><span class="relative mr-1 size-3"><input type="checkbox" checked id="part" class="block size-3 appearance-none border border-black bg-white"><svg class="pointer-events-none absolute inset-0 size-3" viewBox="0 0 12 12"><path d="M2 5l3 4 5-7" fill="none" stroke="#e01010" stroke-width="2.500"/></svg></span><svg class="mr-1 size-3.5"><use href="#cube"/></svg><label for="part" class="text-[17px] font-bold">单向膜成品<span class="font-medium">20_stp</span></label></div></td><td><td><svg class="mx-auto size-4" viewBox="0 0 16 16"><path d="M1 2h14v12H1z" fill="#2038a0"/><path d="M4 3h8v5H4z" fill="#dfe6fa"/><path d="M4 10h8v4H4z" fill="#8c94b8"/><path d="M6 11h2v3H6z" fill="#101840"/></svg></td><td><svg class="mx-auto size-4" viewBox="0 0 16 16"><path d="M2 2h11v12H2z" fill="#fff" stroke="#3850d8"/><path d="M4 8h5M4 11h7" stroke="#3850d8"/><path d="M6 9l1-3 6-5 2 2-6 6z" fill="#f8b818" stroke="#604008" stroke-width=".7"/></svg></td><td></tr>
              <tr><td><td><td><td><td></tr>
              <tr><td><td><td><td><td></tr>
              <tr><td><td><td><td><td></tr>
              <tr><td><td><td><td><td></tr>
              <tr><td><td><td><td><td></tr>
              <tr><td><td><td><td><td></tr>
              <tr><td><td><td><td><td></tr>
              <tr><td><td><td><td><td></tr>
              <tr><td><td><td><td><td></tr>
              <tr><td><td><td><td><td></tr>
              <tr><td><td><td><td><td></tr>
              <tr><td><td><td><td><td></tr>
              <tr><td><td><td><td><td></tr>
              <tr><td><td><td><td><td></tr>
              <tr><td><td><td><td><td></tr>
              <tr><td><td><td><td><td></tr>
              <tr><td><td><td><td><td></tr>
              <tr><td><td><td><td><td></tr>
            </tbody>
          </table>
          <div class="flex h-[22px] items-center bg-[#f0f0f0]">
            <button aria-label="向左滚动" class="grid w-[21px] place-items-center"><svg class="size-3" viewBox="0 0 12 12"><path d="M8 1 3 6l5 5" fill="none" stroke="#555" stroke-width="2"/></svg></button>
            <div class="h-[19px] w-[217px] bg-[#cdcdcd]"></div>
            <button aria-label="向右滚动" class="ml-auto grid w-6 place-items-center"><svg class="size-3" viewBox="0 0 12 12"><path d="M4 1l5 5-5 5" fill="none" stroke="#555" stroke-width="2"/></svg></button>
          </div>
        </div>
        <div class="flex h-[11px] shrink-0 items-center gap-1">
          <span class="h-px flex-1 bg-[#bbb]"></span><span class="h-1.5 w-16 border border-white border-r-[#888] border-b-[#888] bg-[#d4d4d4]"></span><span class="h-px flex-1 bg-[#bbb]"></span>
        </div>
        <h3 class="flex h-[27px] shrink-0 border-b-2 border-[#8c8c8c] bg-linear-to-b from-[#fbfbfb] to-[#d8dadc] pl-1.5 text-[17px] leading-[26px] font-bold">预览<button aria-label="折叠预览" class="ml-auto grid w-[26px] place-items-center border-l border-[#bbb]"><svg class="size-3" viewBox="0 0 12 12"><path d="M1 10 6 2l5 8" fill="none" stroke="#555" stroke-width="2"/></svg></button></h3>
        <div class="flex min-h-0 flex-1 justify-center border-r border-l border-[#888] bg-[#d3d3d3] pt-1 pb-6 shadow-[inset_0_0_3px_#888]">
          <div class="grid w-[247px] place-items-center border border-[#777] border-r-white border-b-white pb-1">没有可用的预览</div>
        </div>
        <h3 class="flex h-[27px] shrink-0 border-b-2 border-[#aaa] bg-linear-to-b from-[#fbfbfb] to-[#d8dadc] pl-1.5 text-[17px] leading-[26px] font-bold">相依性<button aria-label="展开相依性" class="ml-auto grid w-[26px] place-items-center border-l border-[#bbb]"><svg class="size-3" viewBox="0 0 12 12"><path d="M1 2l5 8 5-8" fill="none" stroke="#555" stroke-width="2"/></svg></button></h3>
      </aside>

      <!-- resource bar -->
      <nav class="flex w-10 shrink-0 flex-col gap-0.5 border-l border-[#ddd] bg-[#ababab] [&>button]:flex [&>button]:h-12 [&>button]:w-[35px] [&>button]:shrink-0 [&>button]:items-center [&>button]:rounded-r [&>button]:border [&>button]:border-[#777] [&>button]:bg-linear-to-b [&>button]:from-[#e2e2e2] [&>button]:to-[#cfcfcf]">
        <a href="#" aria-label="资源条选项" class="grid h-[42px] place-items-center pb-3"><svg class="size-3.5" viewBox="0 0 14 14"><circle cx="7" cy="7" r="4.500" fill="none" stroke="#111" stroke-width="1.500"/><circle cx="7" cy="7" r="1" /><path d="M7 0v2M7 12v2M0 7h2M12 7h2M2 2l2 2M10 10l2 2M12 2l-2 2M4 10l-2 2" stroke="#111" stroke-width="1.500"/></svg></a>
        <button class="h-[50px]! w-[37px]! border-l-0! from-[#f0f0f0]! to-[#ececec]!" aria-label="装配导航器"><svg class="size-8" viewBox="0 0 32 32"><use href="#cube" x="3" y="0" width="11" height="11"/><use href="#cube" x="3" y="7" width="11" height="11"/><use href="#cube" x="9" y="8" width="10" height="10"/><path d="M20 16h12" stroke="#000"/><path d="M6 18v13M6 24h9" stroke="#101090" stroke-width="1.500"/><use href="#cube" x="17" y="19" width="12" height="12"/></svg></button>
        <button aria-label="约束导航器"><svg class="size-8"><use href="#mirror"/></svg></button>
        <button aria-label="部件导航器"><svg class="size-8" viewBox="0 0 32 32"><path d="M1 4c0-4 14-4 14 0v8c0 4-14 4-14 0z" fill="#d878c0" stroke="#8c2878"/><ellipse cx="8" cy="4" rx="7" ry="3" fill="#f4c8e8" stroke="#8c2878"/><path d="M19 12h12" stroke="#000"/><path d="M6 17v14M6 24h8" stroke="#101090" stroke-width="1.500"/><circle cx="22" cy="24" r="5.500" fill="#fff" stroke="#98307c" stroke-width="1.500"/><circle cx="22" cy="24" r="2" fill="none" stroke="#98307c" stroke-width="1.500"/></svg></button>
        <button aria-label="重用库"><svg class="size-8" viewBox="0 0 32 32"><path d="M1 9l6-7h6l-4 7v20H1z" fill="#f49838" stroke="#b85808"/><path d="M9 9l6-7h6l-4 7v20H9z" fill="#48d038" stroke="#188010"/><path d="M17 9l6-7h8v20l-6 7h-8z" fill="#48a8f4" stroke="#1860b8"/><path d="M3 8l5-6h5L8 8zM11 8l5-6h5l-5 6zM19 8l5-6h6l-5 6z" fill="#fff"/><path d="M25 9v20M25 9l6-7" stroke="#1860b8"/><path d="M2 13h6M2 25h6" stroke="#fff"/><path d="M10 13h6M10 25h6M18 13h7M18 25h7" stroke="#fffc"/></svg></button>
        <button class="mt-3" aria-label="HD3D 工具"><svg class="size-8" viewBox="0 0 32 32"><path d="M11 7c8 0 13 5 13 13M11 1c12 0 20 8 20 19" fill="none" stroke="#3468d8" stroke-width="3"/><circle cx="11" cy="20" r="10" fill="url(#gEarth)" stroke="#1c50a8"/><path d="M9 12h4v3H9zM7 17h6v8h2v2H7v-2h2v-6H7z" fill="#fff"/></svg></button>
        <button class="mt-3" aria-label="Web 浏览器"><svg class="size-8" viewBox="0 0 32 32"><path d="M4 2h15l8 8v20H4z" fill="url(#gL)" stroke="#2860d0" stroke-width="1.500"/><path d="M19 2v8h8" fill="#fff" stroke="#2860d0"/><circle cx="16" cy="19" r="8" fill="#58a0e0"/><path d="M9 16c4-4 8 0 6 5s-6 1-6-5zM19 12c6 2 6 9 1 12-2-3 1-5-1-7s-1-3 0-5z" fill="#289838"/></svg></button>
        <button class="mt-3" aria-label="历史记录"><svg class="size-8" viewBox="0 0 32 32"><circle cx="16" cy="16" r="13.500" fill="#e4f0fa" stroke="#8c98a4" stroke-width="3"/><circle cx="16" cy="16" r="10" fill="none" stroke="#345" stroke-width="1.500" stroke-dasharray="1 4.236"/><path d="M16 6v10h8" fill="none" stroke="#111" stroke-width="2"/></svg></button>
        <button aria-label="系统可视化场景"><svg class="size-8" viewBox="0 0 32 32"><path d="M1 1h12v30H1z" fill="url(#gRain)"/><path d="M15 9l12 20" stroke="#111" stroke-width="4"/><path d="M14 1l2 5 6-1-4 4 4 5-6-2-2 5-2-6-6 0 5-3-3-5 5 2z" fill="#fff"/></svg></button>
        <button aria-label="加工向导"><svg class="size-8" viewBox="0 0 32 32"><path d="M14 9h17l-12 6h9l-12 6" fill="none" stroke="#3070d8" stroke-width="1.500"/><path d="M3 4h8v21H3z" fill="#48a0ec" stroke="#1c60b8"/><path d="M3 9l8-4M3 15l8-4M3 21l8-4" stroke="#a8dcfc" stroke-width="2"/><path d="M1 27l4-3 3 2 4-2-1 4 2 2-5-1-3 2z" fill="#fff058"/><path d="M17 11l10 16" stroke="#111" stroke-width="4"/><path d="M15 2l2 5 6-1-4 4 3 5-6-2-3 4-1-5h-5l4-3-2-5 5 2z" fill="#fff"/></svg></button>
        <button aria-label="角色"><svg class="size-8" viewBox="0 0 32 32"><path d="M8 30l18-3 4 2-12 3z" fill="#999"/><path d="M21 6 10 20" stroke="#182c28" stroke-width="4"/><path d="M21 7 11 19" stroke="#d0e0dc" stroke-width="1.500"/><path d="M13 5c4-4 8-4 11-3l5 1 2 5-4 1-3-3-5 1-2-1z" fill="#4c6460" stroke="#111"/><path d="M2 18c0 6 5 6 9 4l6 5c2 4 6 3 6-1l-3-3-5-4c0-5-2-7-5-7l1 5-4 3z" fill="#a8acc8" stroke="#3c4060"/><path d="M2 27l5-3 2 4-5 3z" fill="#f89018"/></svg></button>
        <button aria-label="系统场景"><svg class="size-8" viewBox="0 0 32 32"><path d="M9 4h19v21H9z" fill="#fff" stroke="#888"/><path d="M12 7h14v14H12z" fill="#e82018"/><path d="M15 7h8l3 10H12z" fill="#58a0f0"/><path d="M12 21l5-7 2 4 3-4 4 7z" fill="#ffd8a0"/><path d="M2 7l7-3v21l-7 5z" fill="#f4f4f4" stroke="#777"/></svg></button>
      </nav>
    </div>

    <!-- assembly tool bar -->
    <footer class="relative shrink-0">
      <div class="flex h-[42px] bg-linear-to-b from-[#e9e9e9] to-[#cdcdcd]">
        <section aria-label="装配" class="flex items-center border-r border-[#bcbcbc] [&>button]:flex [&>button]:h-10 [&>button]:items-center [&>button]:justify-center">
          <i class="mr-px ml-1 h-8 w-0.5 bg-[repeating-linear-gradient(#a6a6a6_0_2px,transparent_2px_4px)]"></i>
          <button class="w-[39px]" aria-label="装配窗口"><svg class="size-8" viewBox="0 0 32 32"><path d="M1 3h29v26H1z" fill="#8c8f98" stroke="#686c80"/><path d="M1 3h29v4H1z" fill="#6c7484"/><g opacity=".25"><use href="#cube" x="5" y="7" width="12" height="12"/><use href="#cube" x="5" y="15" width="12" height="12"/><use href="#cube" x="14" y="15" width="12" height="12"/></g></svg></button>
          <button class="w-[39px]" aria-label="添加组件"><svg class="size-8" viewBox="0 0 32 32"><use href="#cube" x="1" y="2" width="15" height="15"/><use href="#cube" x="1" y="16" width="14" height="14"/><use href="#cube" x="8" y="17" width="14" height="14"/><path d="M25 0v12M19 6h12" stroke="#0868f0" stroke-width="3"/></svg></button>
          <button class="w-[39px]" aria-label="移动组件"><svg class="size-8" viewBox="0 0 32 32"><use href="#cube" x="9" y="8" width="15" height="15"/><path d="M23 3h7v7M22 7h4v4M3 22v7h7M7 21v4h4" fill="none" stroke="#1c30a0" stroke-width="1.300" stroke-dasharray="4 1"/></svg></button>
          <button class="w-[39px]" aria-label="装配约束"><svg class="size-8"><use href="#mirror"/></svg></button>
          <hr class="mx-0.5 h-9 w-0.5 border-0 border-r border-l border-r-white border-l-[#b4b4b4]">
          <button class="w-[39px]" aria-label="阵列组件"><svg class="size-8" viewBox="0 0 32 32"><use href="#cube" x="1" y="0" width="14" height="14"/><use href="#cube" x="1" y="16" width="14" height="14"/><use href="#cube" x="16" y="16" width="14" height="14"/></svg></button>
          <button class="w-3.5 pt-5" aria-label="工具条选项"><svg class="h-1 w-2"><use href="#caret"/></svg></button>
        </section>
      </div>
      <div class="flex h-[22px] items-stretch border-t border-b-2 border-t-white border-b-[#8a8a8a] bg-[#d8d8d8]">
        <span class="flex-1 border-r border-[#bbb]"></span>
        <span class="flex-1 border-r border-[#bbb]"></span>
        <span class="w-5 border-r border-[#bbb]"></span>
        <span class="flex w-[76px] items-center border-r border-[#bbb] pl-0.5">
          <svg class="size-4"><use href="#flag"/></svg>
          <svg class="ml-1 size-4" viewBox="0 0 16 16"><path d="M1 4V1h3M12 1h3v3M15 12v3h-3M4 15H1v-3" fill="none" stroke="#555"/><path d="M3 3h10v9H3z" fill="#fff" stroke="#123"/><path d="M5 5h6v5H5z" fill="#3c78d0"/></svg>
        </span>
        <span class="w-[19px]"></span>
      </div>

      <!-- watermarks -->
      <div class="pointer-events-none absolute right-0 bottom-3.5 flex w-[92px] flex-col overflow-hidden whitespace-nowrap text-[#7a7a7a]/50">
        <span class="text-[26px] leading-8">激活 Windows</span>
        <span class="text-lg leading-5">转到"设置"以激活</span>
      </div>
      <div class="pointer-events-none absolute right-5 bottom-3 flex items-center gap-2 whitespace-nowrap text-white/60">
        <svg class="h-[82px] w-[72px]" viewBox="0 0 72 82"><path d="M36 1l35 20v40L36 81 1 61V21z" fill="#35a8e0" fill-opacity=".72"/><path d="M1 21 36 1l14 8c5 5 6 12 6 20L36 17 16 29C8 33 3 37 1 44z" fill="#c4e8fa" fill-opacity=".6"/><path d="M36 17l20 12v24L36 67 16 53V29z" fill="#a8d8f0" fill-opacity=".8" stroke="#e8f6ff"/><path d="M36 25l16 9v18l-16 9-16-9V34z" fill="#58b4e4" stroke="#e8f6ff"/><path d="M20 34l16 9 16-9M36 43v18M56 29c0-8-1-15-6-20M56 53c8-4 13-8 15-14M36 67c7 4 14 4 20 2M16 53c0 7 1 14 5 19M16 29C8 33 3 37 1 44M36 17c-7-4-15-4-21-2" fill="none" stroke="#e0f2fc"/></svg>
        <div class="w-[177px]">
          <p class="text-[42px] leading-10 font-bold">3D世界网</p>
          <p class="font-['DejaVu_Sans',sans-serif] text-[15px] leading-5 font-bold">WWW.3DSJW.COM</p>
        </div>
      </div>
    </footer>
  </div>
</body>
</html>
